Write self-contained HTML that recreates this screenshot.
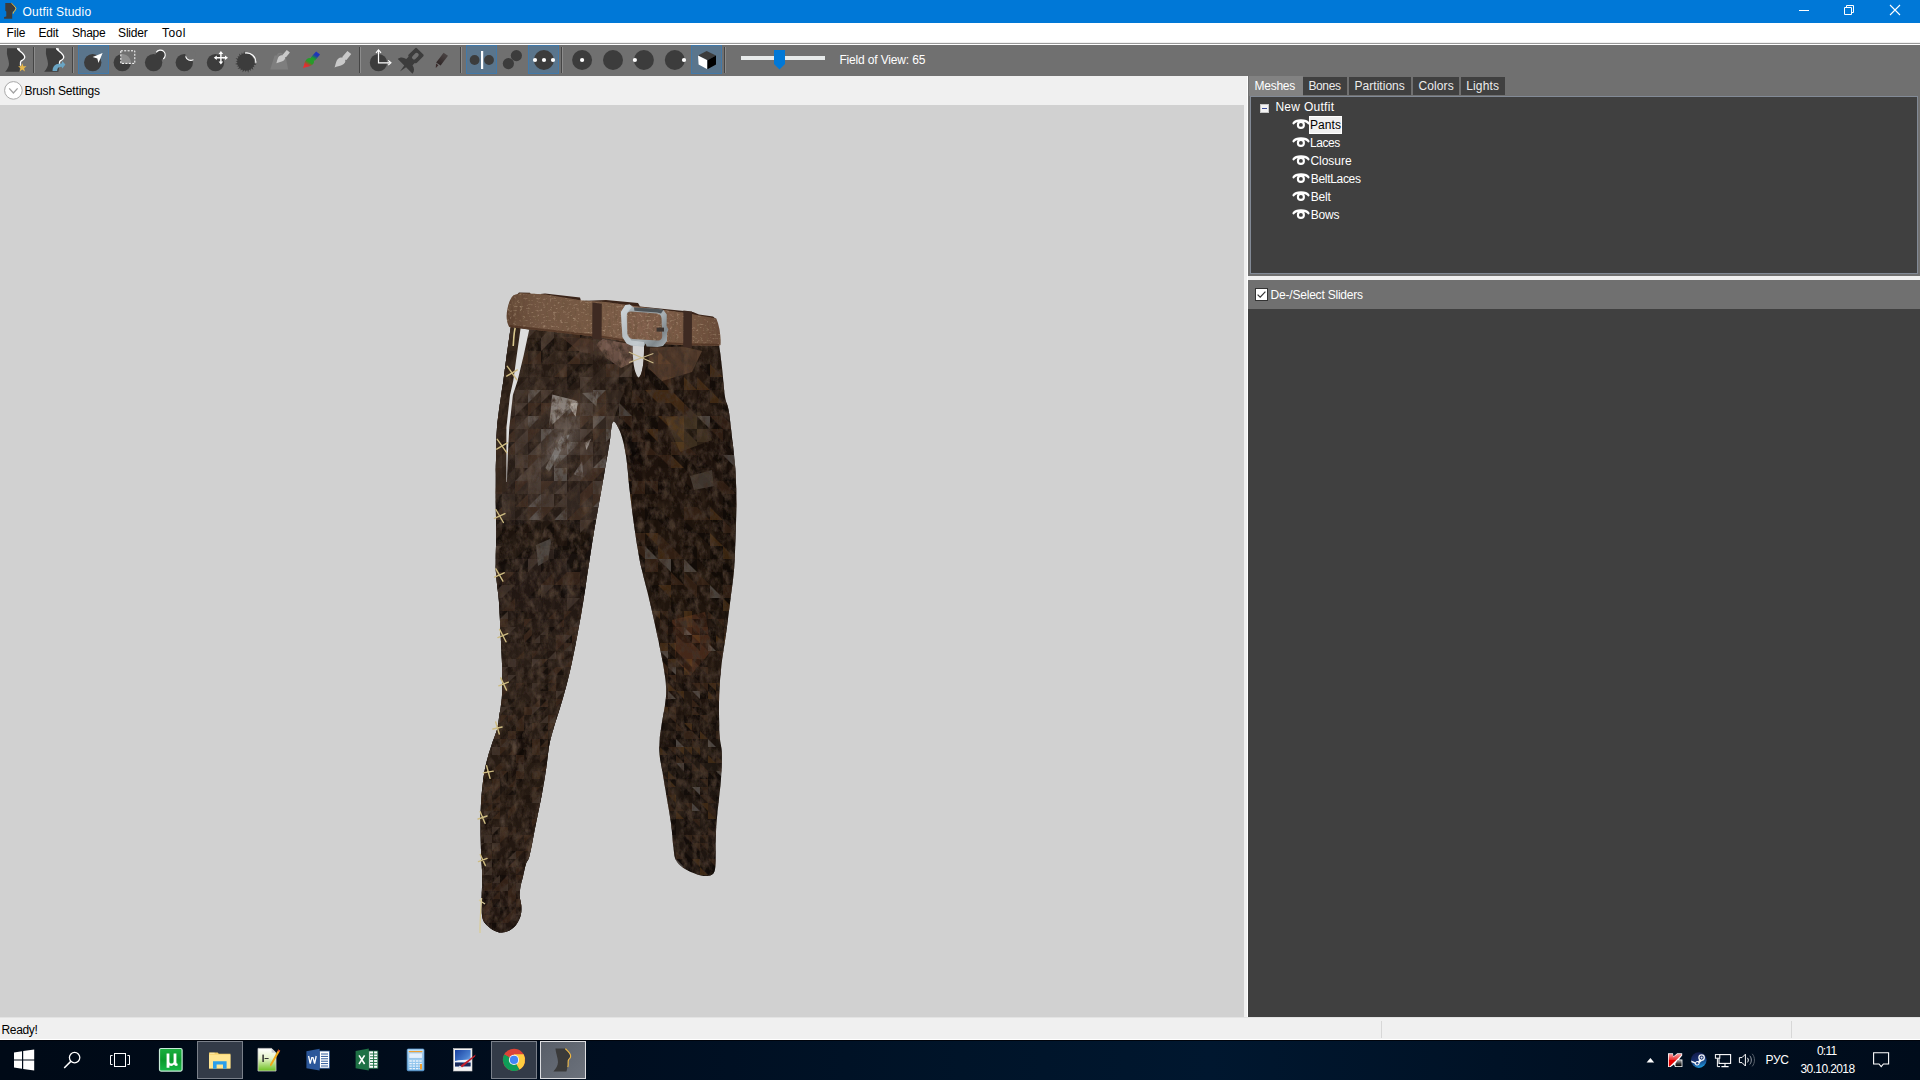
<!DOCTYPE html>
<html>
<head>
<meta charset="utf-8">
<title>Outfit Studio</title>
<style>
*{margin:0;padding:0;box-sizing:border-box}
html,body{width:1920px;height:1080px;overflow:hidden;background:#d1d1d1}
body{font-family:"Liberation Sans",sans-serif;font-size:12px;color:#000;position:relative}
.abs{position:absolute}
.t{position:absolute;white-space:nowrap;line-height:14px;font-size:12px}
#title{left:0;top:0;width:1920px;height:23px;background:#0078d7}
#menu{left:0;top:23px;width:1920px;height:20px;background:#fff}
#menuline1{left:0;top:42px;width:1920px;height:1px;background:#f0f0f0}
#menuline2{left:0;top:43px;width:1920px;height:1px;background:#999}
#menuline3{left:0;top:44px;width:1920px;height:1px;background:#fff}
#toolbar{left:0;top:45px;width:1920px;height:31px;background:#707070}
#brush{left:0;top:76px;width:1244px;height:29px;background:#f0f0f0}
#view{left:0;top:105px;width:1244px;height:913px;background:#d1d1d1}
#vsplit{left:1244px;top:76px;width:4px;height:942px;background:#f0f0f0}
#rpanel{left:1248px;top:76px;width:672px;height:942px;background:#707070}
#hsplit{left:1248px;top:276px;width:672px;height:4px;background:#f0f0f0}
#sliders{left:1248px;top:309px;width:672px;height:709px;background:#404040}
#status{left:0;top:1018px;width:1920px;height:22px;background:#f0f0f0}
#taskbar{left:0;top:1040px;width:1920px;height:40px;background:linear-gradient(90deg,#000a17 0%,#000b19 15%,#000e20 32%,#001429 50%,#00172f 63%,#001226 78%,#000e1f 90%,#000c1b 100%);border-top:1px solid #00040c}
.sep{position:absolute;top:47px;width:2px;height:26px;border-left:1px solid #454545;border-right:1px solid #8c8c8c}
.act{position:absolute;top:45px;height:29px;background:#5a758c;border:1px solid #4279a9}
.tab{position:absolute;top:77px;height:18px;background:#404040;color:#e8e8e8}
.w{color:#fff}
</style>
</head>
<body>
<div id="title" class="abs"></div>
<div id="menu" class="abs"></div>
<div id="menuline1" class="abs"></div>
<div id="menuline2" class="abs"></div>
<div id="menuline3" class="abs"></div>
<div id="toolbar" class="abs"></div>
<div id="brush" class="abs"></div>
<div id="view" class="abs"></div>
<div id="vsplit" class="abs"></div>
<div class="abs" style="left:1247px;top:76px;width:1px;height:941px;background:#fff"></div>
<div id="rpanel" class="abs"></div>
<div id="hsplit" class="abs"></div>
<div id="sliders" class="abs"></div>
<div id="status" class="abs"></div>
<div class="abs" style="left:0;top:1017px;width:1920px;height:1px;background:#e3e3e3"></div>
<div class="abs" style="left:0;top:1039px;width:1920px;height:1px;background:#fff"></div>
<div id="taskbar" class="abs"></div>

<!-- TEXT -->
<div class="t w" id="tx_title" style="left:22.5px;top:5px;letter-spacing:0.21px">Outfit Studio</div>
<div class="t" id="tx_file" style="left:6.5px;top:26px;letter-spacing:-0.17px">File</div>
<div class="t" id="tx_edit" style="left:38.5px;top:26px;letter-spacing:-0.17px">Edit</div>
<div class="t" id="tx_shape" style="left:72.0px;top:26px;letter-spacing:-0.25px">Shape</div>
<div class="t" id="tx_slider" style="left:118.1px;top:26px;letter-spacing:-0.22px">Slider</div>
<div class="t" id="tx_tool" style="left:161.9px;top:26px;letter-spacing:0.53px">Tool</div>
<div class="t w" id="tx_fov" style="left:839.4px;top:53px;letter-spacing:-0.16px">Field of View: 65</div>
<div class="t" id="tx_brush" style="left:24.5px;top:84px;letter-spacing:-0.19px">Brush Settings</div>
<div class="t" id="tx_ready" style="left:1.5px;top:1023px;letter-spacing:-0.34px">Ready!</div>

<svg class="abs" style="left:0;top:0" width="1920" height="23" viewBox="0 0 1920 23">
<path d="M5.3 3.1 H11.6 L14.2 6 L15.2 8.2 L14 10.8 L12.6 11.8 L12.2 13.4 V18.8 H4.1 V17 L6.3 16.4 V11.4 L5.3 10.8 Z" fill="#3c3c3c"/>
<path d="M11.4 3.2 L13.6 5.2 L16 8.2 L15 10.8 L13.6 11.8 L13.2 13.6" fill="none" stroke="#f2b530" stroke-width="1"/>
<path d="M1799 10.5 H1809" stroke="#fff" stroke-width="1"/>
<path d="M1844.5 7.5 H1851.5 V14.5 H1844.5 Z M1846.5 7 V5.5 H1853.5 V12.5 H1852" fill="none" stroke="#fff" stroke-width="1"/>
<path d="M1890 5 L1900 15 M1900 5 L1890 15" stroke="#fff" stroke-width="1.1"/>
</svg>
<svg class="abs" style="left:0;top:76px" width="30" height="29" viewBox="0 76 30 29">
<circle cx="13.4" cy="90.4" r="8.8" fill="#fff" stroke="#a8a8a8" stroke-width="1"/>
<path d="M9.2 88.4 L13.4 93 L17.6 88.4" fill="none" stroke="#a0a0a0" stroke-width="1.3"/>
</svg>
<!-- TOOLBAR -->
<!--TOOLBAR-START-->
<div class="sep" style="left:33px"></div>
<div class="sep" style="left:72px"></div>
<div class="sep" style="left:359px"></div>
<div class="sep" style="left:460px"></div>
<div class="sep" style="left:561px"></div>
<div class="sep" style="left:724px"></div>
<div class="act" style="left:78px;width:31px"></div>
<div class="act" style="left:466px;width:31px"></div>
<div class="act" style="left:528px;width:31px"></div>
<div class="act" style="left:691px;width:31px"></div>
<svg class="abs" style="left:0;top:45px" width="960" height="31" viewBox="0 45 960 31">
<defs>
<path id="bodyshape" d="M7.1 48.2 L16.9 48.2 C18.5 50.2 20.6 51.6 22.5 53.2 C24.2 54.8 25 56.4 24.6 57.8 C24.2 59.4 22.4 60.2 21 61.1 C20.2 61.8 20.4 63.4 20.4 64.9 L19.4 71.8 L5.2 71.8 C7.6 69 9.2 66 9 63.7 C8.8 60.5 7.2 56 6.9 53.6 Z"/>
<g id="bodyline"><path d="M17.6 48.8 C19 50.4 20.6 51.6 22.5 53.2 C24.2 54.8 25 56.4 24.6 57.8 C24.2 59.4 22.4 60.2 21 61.1 C20.2 61.8 20.4 63.4 20.5 65.2" fill="none" stroke="#fff" stroke-width="1.3" stroke-linecap="round"/><path d="M16.9 48.2 L19.6 48.2 L20 50.6 L18.8 50.6 Z" fill="#fff"/></g>
<linearGradient id="rgb" x1="0.85" y1="0" x2="0.25" y2="1">
<stop offset="0" stop-color="#2030c8"/><stop offset="0.22" stop-color="#2038b0"/><stop offset="0.42" stop-color="#20a028"/><stop offset="0.68" stop-color="#2a982a"/><stop offset="0.86" stop-color="#d83030"/><stop offset="1" stop-color="#e83030"/>
</linearGradient>
<linearGradient id="pencilg" x1="446" y1="54" x2="437" y2="66" gradientUnits="userSpaceOnUse">
<stop offset="0" stop-color="#4a4444"/><stop offset="1" stop-color="#2a2020"/>
</linearGradient>
<path id="brushshape" d="M14.6 0.4 L18.6 3.6 L13.6 9.8 L12.2 9.6 C13.2 11.6 11.6 13.8 9 15 C6.6 16 3.6 16.4 1.2 17.6 C2 15.6 2.4 13 3.4 10.6 C4.6 8 6.8 6.6 9.2 7.4 L9.6 6.2 Z"/>
</defs>
<!-- icon1 -->
<use href="#bodyshape" fill="#3c3c3c"/><use href="#bodyline"/>
<path d="M22.3 63.3 L23.4 66.2 L26.5 66.3 L24.1 68.3 L24.9 71.4 L22.3 69.6 L19.7 71.4 L20.5 68.3 L18.1 66.3 L21.2 66.2 Z" fill="#e8b84a"/>
<!-- icon2 -->
<g transform="translate(39 0)"><use href="#bodyshape" fill="#3c3c3c"/><use href="#bodyline"/></g>
<path d="M52.5 70.9 C52.6 67.6 54 65.4 56.4 64.3 C58 63.6 60 63.4 61.9 63.4 L62.2 60.9 L65.4 64.5 L62.4 68.6 L61.6 66.8 C60.4 66.8 59.4 67 58.6 67.5 C57.6 68.2 57.2 69.4 57.2 70.9 Z" fill="#6aa5c4"/>
<!-- icon3 select -->
<circle cx="92.7" cy="62.6" r="8.7" fill="#3c3c3c"/>
<path d="M102.6 52.9 L92.6 57.1 L97.3 58.4 L98.5 63 Z" fill="#fff"/>
<!-- icon4 mask -->
<circle cx="122.3" cy="62.6" r="8.7" fill="#3c3c3c"/>
<path d="M120.8 50.8 H134.8 V63.4 H120.8 Z" fill="#707070"/>
<path d="M120.8 54 C126 53.2 131 57 131 63.4 L120.8 63.4 Z" fill="#8e8e8e"/>
<path d="M120.8 50.8 H134.8 V63.4 H120.8 Z" fill="none" stroke="#fff" stroke-width="1" stroke-dasharray="2 1.4"/>
<!-- icon5 inflate -->
<circle cx="153.6" cy="62.6" r="8.7" fill="#3c3c3c"/>
<circle cx="160.3" cy="55" r="4.8" fill="#3c3c3c"/>
<path d="M156.2 52.4 A4.9 4.9 0 1 1 163.2 59" fill="none" stroke="#fff" stroke-width="1.1"/>
<!-- icon6 deflate -->
<circle cx="184.3" cy="62.6" r="8.7" fill="#3c3c3c"/>
<circle cx="190.6" cy="55.2" r="5.2" fill="#707070"/>
<path d="M185.6 56.4 A5.2 5.2 0 0 0 193.4 59.6" fill="none" stroke="#fff" stroke-width="1.1"/>
<!-- icon7 move -->
<circle cx="215.5" cy="62.6" r="8.7" fill="#3c3c3c"/>
<g fill="#fff"><path d="M220.2 53.4 H221.6 V62.4 H220.2 Z M216.2 57 H225.8 V58.4 H216.2 Z"/>
<path d="M220.9 51 L223.2 54 H218.6 Z M220.9 64.4 L223.2 61.4 H218.6 Z M213.8 57.7 L216.8 55.4 V60 Z M228 57.7 L225 55.4 V60 Z"/></g>
<!-- icon8 smooth -->
<path d="M253.87 62.60 L256.44 65.05 L253.40 64.67 L254.56 67.30 L252.41 66.56 L253.37 69.98 L250.95 68.11 L250.61 70.95 L249.13 69.22 L248.22 72.65 L247.09 69.81 L245.35 72.08 L244.96 69.84 L242.43 72.34 L242.90 69.31 L240.24 70.39 L241.05 68.26 L237.60 69.12 L239.54 66.75 L236.71 66.32 L238.49 64.90 L235.08 63.89 L237.96 62.84 L235.74 61.03 L237.99 60.71 L235.58 58.11 L238.58 58.67 L237.59 55.98 L239.69 56.85 L238.94 53.38 L241.24 55.39 L241.76 52.58 L243.13 54.40 L244.25 51.03 L245.20 53.93 Z" fill="#3c3c3c"/>
<circle cx="245.9" cy="61.9" r="8.5" fill="#3c3c3c"/>
<path d="M244.9 53 A9.2 9.2 0 0 1 255.8 62.8" fill="none" stroke="#fff" stroke-width="1.2"/>
<!-- icon9 weight (disabled) -->
<g fill="#7e7e7e"><path d="M274.6 55.6 H285.4 L288.2 69.6 H270.2 Z"/><path d="M277 56 A3.2 3.2 0 1 1 283.4 56 L282 56 A1.8 1.8 0 1 0 278.4 56 Z"/></g>
<use href="#brushshape" transform="translate(275.4 49.6) scale(0.78)" fill="#c9c9c9"/>
<!-- icon10 colour brush -->
<use href="#brushshape" transform="translate(301.8 51) scale(0.98)" fill="url(#rgb)"/>
<!-- icon11 alpha brush -->
<use href="#brushshape" transform="translate(333.4 50.6) scale(0.96)" fill="#c9c9c9"/>
<!-- icon12 transform -->
<circle cx="378.5" cy="62.6" r="8.7" fill="#3c3c3c"/>
<path d="M378.5 50.4 V62.8 H390" fill="none" stroke="#fff" stroke-width="1.2"/>
<path d="M376 52.8 L378.5 49.8 L381 52.8 M388.2 60.4 L391 62.8 L388.2 65.2" fill="none" stroke="#fff" stroke-width="1.1"/>
<!-- icon13 pin -->
<g transform="translate(407 64.5) rotate(45)" fill="#3c3c3c">
<path d="M-4.2 -18.6 H4.2 C5.2 -18.6 5.8 -18 5.8 -17 V-8.2 C5.8 -7.4 5.2 -6.8 4.4 -6.6 V-3.4 C8 -2.6 10.2 -0.6 10.4 2.6 H1.3 L0 10 L-1.3 2.6 H-10.4 C-10.2 -0.6 -8 -2.6 -4.4 -3.4 V-6.6 C-5.2 -6.8 -5.8 -7.4 -5.8 -8.2 V-17 C-5.8 -18 -5.2 -18.6 -4.2 -18.6 Z"/>
<rect x="-2" y="-15.6" width="4" height="7.6" rx="1.8" fill="#707070"/>
</g>
<!-- icon14 pencil -->
<path d="M443.6 52.8 L448 55.8 L440.6 65.4 L436.2 62.4 Z" fill="url(#pencilg)"/>
<path d="M436 63.6 L438.4 65.2 L435.8 68 Z" fill="#3a2a2a"/>
<!-- icon15 mirror -->
<circle cx="474.6" cy="60" r="4.9" fill="#3c3c3c"/><circle cx="489" cy="60" r="4.9" fill="#3c3c3c"/>
<rect x="481" y="51" width="2.2" height="18" fill="#fff"/>
<!-- icon16 connected -->
<circle cx="508.4" cy="63.6" r="5.6" fill="#3c3c3c"/><circle cx="516.4" cy="55.6" r="5.6" fill="#3c3c3c"/>
<!-- icon17 -->
<circle cx="543.9" cy="60" r="10" fill="#3c3c3c"/>
<circle cx="535" cy="60" r="2.1" fill="#fff"/><circle cx="544" cy="60" r="2.1" fill="#fff"/><circle cx="553" cy="60" r="2.1" fill="#fff"/>
<!-- icons 18-21 -->
<circle cx="582.1" cy="60" r="10" fill="#3c3c3c"/><circle cx="582.1" cy="60" r="2.1" fill="#fff"/>
<circle cx="613" cy="60" r="10" fill="#3c3c3c"/>
<circle cx="643.9" cy="60" r="10" fill="#3c3c3c"/><circle cx="634.9" cy="60" r="2.1" fill="#fff"/>
<circle cx="674.8" cy="60" r="10" fill="#3c3c3c"/><circle cx="684" cy="60" r="2.1" fill="#fff"/>
<!-- icon22 cube -->
<path d="M698 55.6 L706.6 51 L716 55.4 L707.4 60.2 Z" fill="#3c3c3c"/>
<path d="M698 55.6 L707.4 60.2 L707.4 69.2 L698.6 64.6 Z" fill="#fff"/>
<path d="M707.4 60.2 L716 55.4 L716 64.4 L707.4 69.2 Z" fill="#000"/>
<!-- slider -->
<rect x="741" y="56" width="84" height="4" fill="#e7eaea"/>
<path d="M774 50 H785 V64 L779.5 69.4 L774 64 Z" fill="#0078d7"/>
</svg>
<!--TOOLBAR-END-->

<!-- RIGHT PANEL -->
<!--RIGHT-START-->
<div class="abs" style="left:1249px;top:76px;width:54px;height:20px;background:#828282"></div>
<div class="tab" style="left:1303px;width:44px"></div>
<div class="tab" style="left:1349px;width:62px"></div>
<div class="tab" style="left:1413px;width:46px"></div>
<div class="tab" style="left:1461px;width:44px"></div>
<div class="t w" id="tx_meshes" style="left:1254.6px;top:79px;letter-spacing:-0.27px">Meshes</div>
<div class="t" id="tx_bones" style="left:1308.4px;top:79px;color:#ececec;letter-spacing:-0.35px">Bones</div>
<div class="t" id="tx_part" style="left:1354.6px;top:79px;color:#ececec;letter-spacing:0.02px">Partitions</div>
<div class="t" id="tx_colors" style="left:1418.4px;top:79px;color:#ececec;letter-spacing:0.12px">Colors</div>
<div class="t" id="tx_lights" style="left:1466.2px;top:79px;color:#ececec;letter-spacing:0.15px">Lights</div>
<div class="abs" id="tree" style="left:1250px;top:96px;width:668px;height:178px;background:#404040;border:1px solid #828a96"></div>
<div class="abs" style="left:1260px;top:104px;width:9px;height:9px;background:#f4f4f4;border:1px solid #c8c8c8"></div>
<div class="abs" style="left:1262px;top:108px;width:5px;height:1px;background:#3c4c9c"></div>
<div class="t w" id="tx_newoutfit" style="left:1275.4px;top:100px;letter-spacing:0.29px">New Outfit</div>
<div class="abs" style="left:1309px;top:116px;width:33px;height:18px;background:#f0f0f0;border:1px solid #fff"></div>
<div class="t" id="tx_pants" style="left:1310.0px;top:118px;letter-spacing:0.05px">Pants</div>
<div class="t w" id="tx_laces" style="left:1310.0px;top:136px;letter-spacing:-0.45px">Laces</div>
<div class="t w" id="tx_closure" style="left:1310.4px;top:154px;letter-spacing:-0.02px">Closure</div>
<div class="t w" id="tx_beltlaces" style="left:1310.7px;top:172px;letter-spacing:-0.30px">BeltLaces</div>
<div class="t w" id="tx_belt" style="left:1310.7px;top:190px;letter-spacing:-0.17px">Belt</div>
<div class="t w" id="tx_bows" style="left:1310.7px;top:208px;letter-spacing:-0.17px">Bows</div>
<svg class="abs" style="left:1290px;top:114px" width="22" height="110" viewBox="1290 114 22 110">
<defs><g id="eye"><path d="M1293.6 123.2 C1296 119.6 1306 119.6 1308.4 123.2" fill="none" stroke="#fff" stroke-width="2.3" stroke-linecap="round"/>
<circle cx="1300.9" cy="124.9" r="3" fill="none" stroke="#fff" stroke-width="2.1"/></g></defs>
<use href="#eye"/><use href="#eye" y="18"/><use href="#eye" y="36"/><use href="#eye" y="54"/><use href="#eye" y="72"/><use href="#eye" y="90"/>
</svg>
<div class="abs" style="left:1255px;top:288px;width:13px;height:13px;background:#fff;border:1px solid #333"></div>
<svg class="abs" style="left:1255px;top:288px" width="13" height="13" viewBox="0 0 13 13"><path d="M2.6 6.6 L5.2 9.2 L10.4 3.6" fill="none" stroke="#333" stroke-width="1.2"/></svg>
<div class="t w" id="tx_desel" style="left:1270.6px;top:288px;letter-spacing:-0.21px">De-/Select Sliders</div>
<!-- status bar separators -->
<div class="abs" style="left:1381px;top:1021px;width:1px;height:17px;background:#d7d7d7"></div>
<div class="abs" style="left:1791px;top:1021px;width:1px;height:17px;background:#d7d7d7"></div>
<!--RIGHT-END-->

<!-- VIEWPORT -->
<!--PANTS-START-->
<svg class="abs" style="left:460px;top:280px" width="300" height="670" viewBox="460 280 300 670">
<defs>
<clipPath id="cpAll"><path d="M510.9 326.6 C510.2 331.0 508.2 344.1 507.0 353.0 C505.8 361.9 504.5 373.0 503.5 380.0 C502.5 387.0 502.3 387.1 501.2 395.0 C500.1 402.9 497.9 416.6 497.0 427.4 C496.1 438.2 496.2 452.5 496.0 460.0 C495.8 467.5 495.8 465.2 495.8 472.5 C495.8 479.8 495.7 493.4 495.8 503.8 C495.9 514.2 496.2 524.0 496.2 535.0 C496.2 546.0 495.4 559.0 495.8 570.0 C496.2 581.0 498.1 590.8 498.9 601.2 C499.7 611.6 500.0 622.1 500.5 632.5 C501.0 642.9 501.8 653.4 502.0 663.8 C502.2 674.2 502.5 685.9 502.0 695.0 C501.5 704.1 499.8 712.6 498.9 718.4 C498.0 724.2 498.1 725.5 496.9 730.0 C495.6 734.5 493.1 740.4 491.4 745.6 C489.7 750.8 488.0 756.0 486.7 761.2 C485.4 766.4 484.5 770.4 483.6 776.9 C482.7 783.4 481.7 792.5 481.2 800.3 C480.7 808.1 480.5 814.7 480.5 823.8 C480.5 832.9 480.9 847.3 481.2 855.0 C481.4 862.7 481.9 864.7 482.0 870.0 C482.1 875.3 482.1 881.1 482.0 887.0 C481.9 892.9 481.4 900.1 481.5 905.5 C481.6 910.9 481.7 915.8 482.9 919.4 C484.1 923.0 486.7 924.9 488.9 926.9 C491.1 928.9 494.1 930.6 496.3 931.5 C498.5 932.4 499.7 932.6 501.9 932.4 C504.1 932.2 506.8 931.9 509.3 930.5 C511.8 929.1 514.8 926.6 516.7 924.0 C518.6 921.4 520.0 917.9 520.8 914.8 C521.6 911.7 521.5 908.6 521.3 905.5 C521.1 902.4 519.8 899.4 519.6 896.3 C519.5 893.2 519.9 890.1 520.4 887.0 C520.9 883.9 521.8 881.6 522.7 877.8 C523.6 873.9 524.7 867.7 525.9 863.9 C527.1 860.1 528.0 861.7 529.7 855.0 C531.4 848.3 533.8 834.2 535.9 823.8 C538.0 813.4 540.5 801.6 542.2 792.5 C543.9 783.4 544.9 776.8 546.1 769.0 C547.3 761.2 548.0 752.1 549.2 745.6 C550.4 739.1 550.7 738.4 553.1 730.0 C555.5 721.6 560.7 706.0 563.8 695.0 C566.9 684.0 569.3 674.2 571.6 663.8 C573.9 653.4 575.8 642.9 577.8 632.5 C579.8 622.1 581.6 611.6 583.3 601.2 C585.0 590.8 586.3 581.0 588.0 570.0 C589.7 559.0 591.6 546.0 593.4 535.0 C595.2 524.0 597.1 514.2 598.9 503.8 C600.7 493.4 602.6 482.9 604.4 472.5 C606.2 462.1 608.4 449.7 609.8 441.2 C611.2 432.7 611.2 423.0 613.0 421.7 C614.8 420.4 618.6 427.5 620.8 433.4 C623.0 439.3 624.8 447.8 626.2 456.9 C627.6 466.0 628.2 477.7 629.4 488.1 C630.6 498.5 631.9 509.0 633.3 519.4 C634.7 529.8 636.6 542.2 638.0 550.6 C639.4 559.0 639.9 561.6 641.9 570.0 C643.9 578.4 647.2 590.8 649.7 601.2 C652.2 611.6 654.5 622.1 656.7 632.5 C658.9 642.9 661.4 654.7 663.0 663.8 C664.6 672.9 665.7 680.7 666.1 687.2 C666.5 693.7 666.1 696.3 665.3 702.8 C664.5 709.3 662.3 720.0 661.4 726.2 C660.5 732.4 659.9 735.5 659.6 740.0 C659.3 744.5 658.8 747.2 659.4 753.4 C660.0 759.5 662.0 769.1 663.3 776.9 C664.6 784.7 665.9 792.5 667.2 800.3 C668.5 808.1 670.1 816.0 671.1 823.8 C672.1 831.6 672.6 841.2 673.4 847.2 C674.2 853.2 674.2 856.3 675.8 859.7 C677.4 863.1 679.5 865.1 682.8 867.5 C686.0 869.9 691.4 872.4 695.3 873.8 C699.2 875.2 703.2 876.2 706.2 876.1 C709.2 876.0 712.0 875.4 713.6 873.2 C715.2 871.0 715.3 867.1 715.6 862.8 C715.9 858.5 715.5 853.7 715.6 847.2 C715.7 840.7 715.9 831.6 716.4 823.8 C716.9 816.0 718.0 808.1 718.8 800.3 C719.6 792.5 720.6 784.7 721.1 776.9 C721.6 769.1 722.1 759.9 721.9 753.4 C721.7 746.9 720.2 742.5 719.8 738.0 C719.3 733.5 719.3 733.4 719.2 726.2 C719.1 719.0 718.8 705.4 719.2 695.0 C719.6 684.6 720.4 674.2 721.6 663.8 C722.8 653.4 724.8 642.9 726.2 632.5 C727.6 622.1 728.9 611.6 730.2 601.2 C731.5 590.8 733.1 581.0 734.0 570.0 C734.9 559.0 735.2 546.0 735.6 535.0 C736.0 524.0 736.4 514.2 736.4 503.8 C736.4 493.4 736.2 482.9 735.6 472.5 C735.0 462.1 733.7 451.6 732.5 441.2 C731.3 430.8 729.9 417.4 728.6 410.0 C727.4 402.6 726.1 403.8 725.0 396.7 C723.9 389.6 723.0 376.0 722.0 367.5 C721.0 359.0 719.7 349.2 719.2 345.6 L684.2 344.9 L625.8 341.2 L592.3 336.1 Z"/></clipPath>
<clipPath id="cpLeft"><path d="M460 280 H640 V345 L613 421.7 V960 H460 Z"/></clipPath>
<linearGradient id="gR" x1="0" y1="345" x2="0" y2="876" gradientUnits="userSpaceOnUse">
<stop offset="0" stop-color="#261a12"/><stop offset="0.2" stop-color="#1d120c"/><stop offset="0.45" stop-color="#1e140c"/><stop offset="0.62" stop-color="#241810"/><stop offset="0.8" stop-color="#201812"/><stop offset="1" stop-color="#1e1510"/>
</linearGradient>
<linearGradient id="gL" x1="0" y1="330" x2="0" y2="932" gradientUnits="userSpaceOnUse">
<stop offset="0" stop-color="#2d2017"/><stop offset="0.2" stop-color="#342923"/><stop offset="0.36" stop-color="#2f241e"/><stop offset="0.42" stop-color="#201612"/><stop offset="0.55" stop-color="#291e17"/><stop offset="0.75" stop-color="#251a12"/><stop offset="1" stop-color="#201510"/>
</linearGradient>
<linearGradient id="gBelt" x1="506" y1="0" x2="721" y2="0" gradientUnits="userSpaceOnUse">
<stop offset="0" stop-color="#5d4230"/><stop offset="0.15" stop-color="#735643"/><stop offset="0.4" stop-color="#795b45"/><stop offset="0.65" stop-color="#82604d"/><stop offset="0.85" stop-color="#775742"/><stop offset="1" stop-color="#654736"/>
</linearGradient>
<radialGradient id="gHi" cx="562" cy="440" r="60" gradientUnits="userSpaceOnUse" gradientTransform="rotate(-62 562 440) scale(1 0.38) translate(0 718)">
<stop offset="0" stop-color="#9a928c" stop-opacity="0.6"/><stop offset="1" stop-color="#6a5a50" stop-opacity="0"/>
</radialGradient>
<linearGradient id="gBuck" x1="620" y1="304" x2="668" y2="347" gradientUnits="userSpaceOnUse"><stop offset="0" stop-color="#c8d0d4"/><stop offset="0.35" stop-color="#8e969a"/><stop offset="0.6" stop-color="#a8b0b4"/><stop offset="0.8" stop-color="#80888c"/><stop offset="1" stop-color="#b0b8bc"/></linearGradient>
<linearGradient id="gEdgeR" x1="613" y1="0" x2="737" y2="0" gradientUnits="userSpaceOnUse">
<stop offset="0" stop-color="#000" stop-opacity="0.35"/><stop offset="0.25" stop-color="#000" stop-opacity="0"/><stop offset="0.75" stop-color="#000" stop-opacity="0"/><stop offset="1" stop-color="#000" stop-opacity="0.25"/>
</linearGradient>
<filter id="fDark" x="460" y="280" width="300" height="670" filterUnits="userSpaceOnUse">
<feTurbulence type="fractalNoise" baseFrequency="0.16 0.1" numOctaves="4" seed="7" result="n"/>
<feColorMatrix in="n" type="matrix" values="0 0 0 0 0.05  0 0 0 0 0.03  0 0 0 0 0.02  2.8 0 0 0 -1.2" result="a"/>
<feComposite in="a" in2="SourceGraphic" operator="in"/>
</filter>
<filter id="fLight" x="460" y="280" width="300" height="670" filterUnits="userSpaceOnUse">
<feTurbulence type="fractalNoise" baseFrequency="0.11 0.07" numOctaves="4" seed="23" result="n"/>
<feColorMatrix in="n" type="matrix" values="0 0 0 0 0.40  0 0 0 0 0.30  0 0 0 0 0.24  0 1.5 0 0 -0.78" result="a"/>
<feComposite in="a" in2="SourceGraphic" operator="in"/>
</filter>
<filter id="fLight2" x="460" y="280" width="300" height="670" filterUnits="userSpaceOnUse">
<feTurbulence type="fractalNoise" baseFrequency="0.12 0.05" numOctaves="3" seed="41" result="n"/>
<feColorMatrix in="n" type="matrix" values="0 0 0 0 0.34  0 0 0 0 0.22  0 0 0 0 0.13  0 0 1.8 0 -0.9" result="a"/>
<feComposite in="a" in2="SourceGraphic" operator="in"/>
</filter>
<filter id="fBelt" x="500" y="285" width="230" height="70" filterUnits="userSpaceOnUse">
<feTurbulence type="fractalNoise" baseFrequency="0.35 0.09" numOctaves="3" seed="5" result="n"/>
<feColorMatrix in="n" type="matrix" values="0 0 0 0 0.16  0 0 0 0 0.09  0 0 0 0 0.05  2.4 0 0 0 -0.95" result="a"/>
<feComposite in="a" in2="SourceGraphic" operator="in"/>
</filter>
<filter id="fBelt2" x="500" y="285" width="230" height="70" filterUnits="userSpaceOnUse">
<feTurbulence type="fractalNoise" baseFrequency="0.3 0.5" numOctaves="2" seed="19" result="n"/>
<feColorMatrix in="n" type="matrix" values="0 0 0 0 0.68  0 0 0 0 0.52  0 0 0 0 0.36  0 1.5 0 0 -0.86" result="a"/>
<feComposite in="a" in2="SourceGraphic" operator="in"/>
</filter>
</defs>
<!-- waist tabs behind belt -->
<path d="M519 292.6 L530 292.8 L531 295 L545 293.4 L580 297.6 L581 301 L606 300 L638 303 L640 306.5 L684 311 L693 312 L699 314.6 L713 316.4 L716 319 L716 324 L512 300 Z" fill="#3a2419"/>
<!-- strap -->
<!-- pants body -->
<path d="M510.9 326.6 C510.2 331.0 508.2 344.1 507.0 353.0 C505.8 361.9 504.5 373.0 503.5 380.0 C502.5 387.0 502.3 387.1 501.2 395.0 C500.1 402.9 497.9 416.6 497.0 427.4 C496.1 438.2 496.2 452.5 496.0 460.0 C495.8 467.5 495.8 465.2 495.8 472.5 C495.8 479.8 495.7 493.4 495.8 503.8 C495.9 514.2 496.2 524.0 496.2 535.0 C496.2 546.0 495.4 559.0 495.8 570.0 C496.2 581.0 498.1 590.8 498.9 601.2 C499.7 611.6 500.0 622.1 500.5 632.5 C501.0 642.9 501.8 653.4 502.0 663.8 C502.2 674.2 502.5 685.9 502.0 695.0 C501.5 704.1 499.8 712.6 498.9 718.4 C498.0 724.2 498.1 725.5 496.9 730.0 C495.6 734.5 493.1 740.4 491.4 745.6 C489.7 750.8 488.0 756.0 486.7 761.2 C485.4 766.4 484.5 770.4 483.6 776.9 C482.7 783.4 481.7 792.5 481.2 800.3 C480.7 808.1 480.5 814.7 480.5 823.8 C480.5 832.9 480.9 847.3 481.2 855.0 C481.4 862.7 481.9 864.7 482.0 870.0 C482.1 875.3 482.1 881.1 482.0 887.0 C481.9 892.9 481.4 900.1 481.5 905.5 C481.6 910.9 481.7 915.8 482.9 919.4 C484.1 923.0 486.7 924.9 488.9 926.9 C491.1 928.9 494.1 930.6 496.3 931.5 C498.5 932.4 499.7 932.6 501.9 932.4 C504.1 932.2 506.8 931.9 509.3 930.5 C511.8 929.1 514.8 926.6 516.7 924.0 C518.6 921.4 520.0 917.9 520.8 914.8 C521.6 911.7 521.5 908.6 521.3 905.5 C521.1 902.4 519.8 899.4 519.6 896.3 C519.5 893.2 519.9 890.1 520.4 887.0 C520.9 883.9 521.8 881.6 522.7 877.8 C523.6 873.9 524.7 867.7 525.9 863.9 C527.1 860.1 528.0 861.7 529.7 855.0 C531.4 848.3 533.8 834.2 535.9 823.8 C538.0 813.4 540.5 801.6 542.2 792.5 C543.9 783.4 544.9 776.8 546.1 769.0 C547.3 761.2 548.0 752.1 549.2 745.6 C550.4 739.1 550.7 738.4 553.1 730.0 C555.5 721.6 560.7 706.0 563.8 695.0 C566.9 684.0 569.3 674.2 571.6 663.8 C573.9 653.4 575.8 642.9 577.8 632.5 C579.8 622.1 581.6 611.6 583.3 601.2 C585.0 590.8 586.3 581.0 588.0 570.0 C589.7 559.0 591.6 546.0 593.4 535.0 C595.2 524.0 597.1 514.2 598.9 503.8 C600.7 493.4 602.6 482.9 604.4 472.5 C606.2 462.1 608.4 449.7 609.8 441.2 C611.2 432.7 611.2 423.0 613.0 421.7 C614.8 420.4 618.6 427.5 620.8 433.4 C623.0 439.3 624.8 447.8 626.2 456.9 C627.6 466.0 628.2 477.7 629.4 488.1 C630.6 498.5 631.9 509.0 633.3 519.4 C634.7 529.8 636.6 542.2 638.0 550.6 C639.4 559.0 639.9 561.6 641.9 570.0 C643.9 578.4 647.2 590.8 649.7 601.2 C652.2 611.6 654.5 622.1 656.7 632.5 C658.9 642.9 661.4 654.7 663.0 663.8 C664.6 672.9 665.7 680.7 666.1 687.2 C666.5 693.7 666.1 696.3 665.3 702.8 C664.5 709.3 662.3 720.0 661.4 726.2 C660.5 732.4 659.9 735.5 659.6 740.0 C659.3 744.5 658.8 747.2 659.4 753.4 C660.0 759.5 662.0 769.1 663.3 776.9 C664.6 784.7 665.9 792.5 667.2 800.3 C668.5 808.1 670.1 816.0 671.1 823.8 C672.1 831.6 672.6 841.2 673.4 847.2 C674.2 853.2 674.2 856.3 675.8 859.7 C677.4 863.1 679.5 865.1 682.8 867.5 C686.0 869.9 691.4 872.4 695.3 873.8 C699.2 875.2 703.2 876.2 706.2 876.1 C709.2 876.0 712.0 875.4 713.6 873.2 C715.2 871.0 715.3 867.1 715.6 862.8 C715.9 858.5 715.5 853.7 715.6 847.2 C715.7 840.7 715.9 831.6 716.4 823.8 C716.9 816.0 718.0 808.1 718.8 800.3 C719.6 792.5 720.6 784.7 721.1 776.9 C721.6 769.1 722.1 759.9 721.9 753.4 C721.7 746.9 720.2 742.5 719.8 738.0 C719.3 733.5 719.3 733.4 719.2 726.2 C719.1 719.0 718.8 705.4 719.2 695.0 C719.6 684.6 720.4 674.2 721.6 663.8 C722.8 653.4 724.8 642.9 726.2 632.5 C727.6 622.1 728.9 611.6 730.2 601.2 C731.5 590.8 733.1 581.0 734.0 570.0 C734.9 559.0 735.2 546.0 735.6 535.0 C736.0 524.0 736.4 514.2 736.4 503.8 C736.4 493.4 736.2 482.9 735.6 472.5 C735.0 462.1 733.7 451.6 732.5 441.2 C731.3 430.8 729.9 417.4 728.6 410.0 C727.4 402.6 726.1 403.8 725.0 396.7 C723.9 389.6 723.0 376.0 722.0 367.5 C721.0 359.0 719.7 349.2 719.2 345.6 L684.2 344.9 L625.8 341.2 L592.3 336.1 Z" fill="url(#gR)"/>
<g clip-path="url(#cpAll)">
<rect x="460" y="280" width="300" height="670" fill="url(#gEdgeR)"/>
<g clip-path="url(#cpLeft)"><rect x="460" y="280" width="300" height="670" fill="url(#gL)"/>
<rect x="460" y="280" width="300" height="670" fill="url(#gHi)"/>
<path d="M497 528 L548 520 L590 534 L586 556 L540 548 L500 566 Z" fill="#1e140e" opacity="0.75"/>
<path d="M507 738 L530 728 L527 760 L512 778 Z" fill="#160e0a" opacity="0.8"/>
</g>
<path d="M623 433 L640 440 L632 470 Z" fill="#0c0806" opacity="0.8"/>
<path d="M672 620 L705 612 L712 650 L690 676 L676 660 Z" fill="#5c3420" opacity="0.6"/>
<path d="M665 418 L700 412 L712 440 L680 452 Z" fill="#5a4a30" opacity="0.5"/>
<!--FACETS-->
<g><path d="M567 325L580 325L567 338ZM580 325L593 325L580 338ZM606 325L606 338L593 338ZM541 338L541 351L528 351ZM554 338L554 351L541 351ZM567 338L580 338L567 351ZM671 338L684 351L671 351ZM502 351L515 351L502 364ZM541 351L554 351L541 364ZM567 351L580 351L567 364ZM619 351L619 364L606 364ZM645 351L658 351L658 364ZM658 351L671 351L671 364ZM671 351L684 351L684 364ZM684 351L697 351L697 364ZM580 364L580 377L567 377ZM580 364L593 364L580 377ZM645 364L658 364L658 377ZM645 364L658 377L645 377ZM671 364L684 377L671 377ZM697 364L710 364L710 377ZM502 377L515 377L502 390ZM567 377L580 377L567 390ZM619 377L632 377L619 390ZM632 377L645 390L632 390ZM645 377L658 377L658 390ZM658 377L671 390L658 390ZM710 377L723 377L723 390ZM710 377L723 390L710 390ZM723 377L736 377L736 390ZM502 390L515 390L502 403ZM671 390L684 390L684 403ZM489 403L502 403L489 416ZM502 403L515 403L502 416ZM632 403L645 403L645 416ZM684 403L697 403L697 416ZM723 403L736 416L723 416ZM619 416L632 429L619 429ZM645 416L658 416L658 429ZM645 416L658 429L645 429ZM697 416L710 429L697 429ZM710 416L723 429L710 429ZM723 416L736 416L736 429ZM645 429L658 442L645 442ZM684 429L697 429L697 442ZM502 442L515 442L502 455ZM632 442L645 455L632 455ZM723 442L736 442L736 455ZM632 455L645 455L645 468ZM671 455L684 455L684 468ZM684 455L697 468L684 468ZM697 455L710 468L697 468ZM710 455L723 455L723 468ZM684 468L697 468L697 481ZM697 468L710 481L697 481ZM723 468L736 481L723 481ZM619 481L632 481L632 494ZM619 481L632 494L619 494ZM645 481L658 494L645 494ZM658 481L671 481L671 494ZM658 481L671 494L658 494ZM684 481L697 494L684 494ZM697 481L710 481L710 494ZM502 494L502 507L489 507ZM723 494L736 507L723 507ZM489 507L502 507L489 520ZM645 507L658 507L658 520ZM645 507L658 520L645 520ZM658 507L671 520L658 520ZM723 507L736 520L723 520ZM489 520L502 520L489 533ZM502 520L515 520L502 533ZM515 520L528 520L515 533ZM541 520L541 533L528 533ZM554 520L554 533L541 533ZM567 520L580 520L567 533ZM580 520L580 533L567 533ZM593 520L606 520L593 533ZM632 520L645 533L632 533ZM645 520L658 533L645 533ZM658 520L671 520L671 533ZM684 520L697 533L684 533ZM710 520L723 520L723 533ZM502 533L502 546L489 546ZM554 533L554 546L541 546ZM567 533L580 533L567 546ZM580 533L580 546L567 546ZM593 533L593 546L580 546ZM593 533L606 533L593 546ZM697 533L710 533L710 546ZM528 546L528 559L515 559ZM528 546L541 546L528 559ZM554 546L567 546L554 559ZM567 546L567 559L554 559ZM567 546L580 546L567 559ZM580 546L580 559L567 559ZM593 546L593 559L580 559ZM632 546L645 559L632 559ZM645 546L658 546L658 559ZM684 546L697 546L697 559ZM710 546L723 546L723 559ZM710 546L723 559L710 559ZM502 559L502 572L489 572ZM502 559L515 559L502 572ZM515 559L515 572L502 572ZM528 559L528 572L515 572ZM541 559L554 559L541 572ZM567 559L580 559L567 572ZM580 559L580 572L567 572ZM580 559L593 559L580 572ZM632 559L645 559L645 572ZM632 559L645 572L632 572ZM671 559L684 572L671 572ZM684 559L697 559L697 572ZM697 559L710 559L710 572ZM723 559L736 572L723 572ZM671 572L684 572L684 585ZM710 572L723 572L723 585ZM489 585L502 585L489 598ZM541 585L541 598L528 598ZM554 585L567 585L554 598ZM567 585L567 598L554 598ZM580 585L593 585L580 598ZM645 585L658 585L658 598ZM645 598L658 611L645 611ZM671 598L684 611L671 611ZM684 598L697 598L697 611ZM710 598L723 598L723 611ZM723 598L736 598L736 611ZM500 611L508 611L500 619ZM516 611L524 611L516 619ZM668 611L676 611L676 619ZM708 611L716 611L716 619ZM540 619L548 619L540 627ZM556 619L564 619L556 627ZM668 619L676 627L668 627ZM692 619L700 619L700 627ZM708 619L716 619L716 627ZM524 627L532 627L524 635ZM548 627L556 627L548 635ZM700 627L708 635L700 635ZM708 627L716 627L716 635ZM708 627L716 635L708 635ZM724 627L732 627L732 635ZM532 635L532 643L524 643ZM572 635L572 643L564 643ZM668 635L676 635L676 643ZM684 635L692 635L692 643ZM708 635L716 635L716 643ZM540 643L548 643L540 651ZM652 643L660 643L660 651ZM692 643L700 643L700 651ZM716 643L724 651L716 651ZM724 643L732 651L724 651ZM500 651L508 651L500 659ZM548 651L548 659L540 659ZM668 651L676 659L668 659ZM676 651L684 659L676 659ZM548 659L548 667L540 667ZM580 659L580 667L572 667ZM660 659L668 659L668 667ZM676 659L684 659L684 667ZM700 659L708 667L700 667ZM548 667L548 675L540 675ZM564 667L564 675L556 675ZM668 667L676 675L668 675ZM676 667L684 667L684 675ZM540 675L548 675L540 683ZM668 675L676 683L668 683ZM692 675L700 675L700 683ZM548 683L548 691L540 691ZM676 683L684 683L684 691ZM684 683L692 691L684 691ZM708 683L716 691L708 691ZM676 691L684 699L676 699ZM700 691L708 691L708 699ZM700 691L708 699L700 699ZM708 691L716 691L716 699ZM508 699L516 699L508 707ZM540 699L548 699L540 707ZM660 699L668 699L668 707ZM668 699L676 699L676 707ZM676 699L684 699L684 707ZM692 699L700 699L700 707ZM708 699L716 707L708 707ZM508 707L516 707L508 715ZM540 707L540 715L532 715ZM540 707L548 707L540 715ZM692 707L700 707L700 715ZM700 707L708 715L700 715ZM668 715L676 723L668 723ZM684 715L692 723L684 723ZM692 715L700 715L700 723ZM716 715L724 723L716 723ZM516 723L516 731L508 731ZM524 723L532 723L524 731ZM548 723L548 731L540 731ZM660 723L668 723L668 731ZM660 723L668 731L660 731ZM668 723L676 731L668 731ZM684 723L692 731L684 731ZM708 723L716 723L716 731ZM524 731L524 739L516 739ZM524 731L532 731L524 739ZM676 731L684 739L676 739ZM692 731L700 731L700 739ZM708 731L716 739L708 739ZM532 739L532 747L524 747ZM540 739L548 739L540 747ZM548 739L556 739L548 747ZM668 739L676 739L676 747ZM692 739L700 739L700 747ZM524 747L524 755L516 755ZM660 747L668 747L668 755ZM652 755L660 763L652 763ZM660 755L668 755L668 763ZM660 755L668 763L660 763ZM668 755L676 755L676 763ZM676 755L684 755L684 763ZM692 755L700 755L700 763ZM700 755L708 763L700 763ZM668 763L676 763L676 771ZM668 763L676 771L668 771ZM684 763L692 771L684 771ZM716 763L724 763L724 771ZM484 771L484 779L476 779ZM508 771L508 779L500 779ZM676 771L684 779L676 779ZM684 771L692 771L692 779ZM684 771L692 779L684 779ZM700 771L708 779L700 779ZM708 771L716 779L708 779ZM716 771L724 779L716 779ZM500 779L508 779L500 787ZM508 779L508 787L500 787ZM516 779L524 779L516 787ZM668 779L676 779L676 787ZM708 779L716 787L708 787ZM716 779L724 779L724 787ZM716 779L724 787L716 787ZM484 787L484 795L476 795ZM500 787L508 787L500 795ZM516 787L516 795L508 795ZM660 787L668 795L660 795ZM684 787L692 795L684 795ZM540 795L548 795L540 803ZM692 795L700 795L700 803ZM716 795L724 803L716 803ZM660 803L668 803L668 811ZM700 803L708 811L700 811ZM684 811L692 819L684 819ZM484 819L492 819L484 827ZM668 819L676 819L676 827ZM684 819L692 819L692 827ZM684 819L692 827L684 827ZM708 819L716 819L716 827ZM500 827L500 835L492 835ZM668 827L676 827L676 835ZM668 827L676 835L668 835ZM716 827L724 827L724 835ZM684 835L692 843L684 843ZM684 843L692 843L692 851ZM508 851L516 851L508 859ZM676 851L684 851L684 859ZM684 851L692 859L684 859ZM692 851L700 851L700 859ZM492 859L500 859L492 867ZM508 859L516 859L508 867ZM676 859L684 859L684 867ZM684 859L692 859L692 867ZM684 859L692 867L684 867ZM708 859L716 867L708 867ZM676 867L684 875L676 875ZM684 867L692 867L692 875ZM700 867L708 867L708 875ZM708 867L716 867L716 875ZM708 867L716 875L708 875ZM492 875L500 875L492 883ZM500 875L508 875L500 883ZM476 891L484 891L476 899ZM484 891L492 891L484 899ZM484 899L492 899L484 907ZM500 899L500 907L492 907ZM500 907L508 907L500 915ZM484 923L492 923L484 931ZM492 923L500 923L492 931ZM516 923L516 931L508 931ZM500 931L500 939L492 939Z" fill="#0a0604" opacity="0.55"/>
<path d="M541 325L554 325L541 338ZM528 338L541 338L528 351ZM554 338L567 338L554 351ZM567 338L567 351L554 351ZM632 338L632 351L619 351ZM658 338L671 338L671 351ZM658 338L671 351L658 351ZM671 338L684 338L684 351ZM684 338L697 351L684 351ZM697 338L710 351L697 351ZM515 351L515 364L502 364ZM567 351L567 364L554 364ZM593 351L606 351L593 364ZM606 351L606 364L593 364ZM606 351L619 351L606 364ZM632 351L632 364L619 364ZM632 351L645 364L632 364ZM671 351L684 364L671 364ZM684 351L697 364L684 364ZM710 351L723 351L723 364ZM502 364L515 364L502 377ZM528 364L541 364L528 377ZM541 364L554 364L541 377ZM554 364L554 377L541 377ZM567 364L580 364L567 377ZM593 364L606 364L593 377ZM671 364L684 364L684 377ZM502 377L502 390L489 390ZM515 377L528 377L515 390ZM528 377L541 377L528 390ZM554 377L554 390L541 390ZM554 377L567 377L554 390ZM580 377L580 390L567 390ZM606 377L606 390L593 390ZM619 377L619 390L606 390ZM632 377L632 390L619 390ZM632 377L645 377L645 390ZM645 377L658 390L645 390ZM671 377L684 377L684 390ZM554 390L554 403L541 403ZM619 390L632 390L632 403ZM645 390L658 403L645 403ZM697 390L710 403L697 403ZM723 390L736 390L736 403ZM528 403L528 416L515 416ZM541 403L541 416L528 416ZM606 403L619 403L606 416ZM619 403L632 403L632 416ZM632 403L645 416L632 416ZM658 403L671 416L658 416ZM671 403L684 416L671 416ZM723 403L736 403L736 416ZM502 416L502 429L489 429ZM502 416L515 416L502 429ZM554 416L554 429L541 429ZM593 416L593 429L580 429ZM632 416L645 429L632 429ZM658 416L671 429L658 429ZM502 429L502 442L489 442ZM502 429L515 429L502 442ZM593 429L593 442L580 442ZM619 429L619 442L606 442ZM723 429L736 429L736 442ZM528 442L541 442L528 455ZM593 442L606 442L593 455ZM645 442L658 442L658 455ZM658 442L671 442L671 455ZM697 442L710 442L710 455ZM697 442L710 455L697 455ZM515 455L515 468L502 468ZM554 455L554 468L541 468ZM567 455L580 455L567 468ZM580 455L580 468L567 468ZM593 455L606 455L593 468ZM619 455L632 455L632 468ZM632 455L645 468L632 468ZM658 455L671 468L658 468ZM710 455L723 468L710 468ZM723 455L736 468L723 468ZM502 468L515 468L502 481ZM515 468L528 468L515 481ZM541 468L554 468L541 481ZM554 468L554 481L541 481ZM567 468L580 468L567 481ZM606 468L606 481L593 481ZM632 468L645 481L632 481ZM658 468L671 481L658 481ZM671 468L684 468L684 481ZM710 468L723 468L723 481ZM723 468L736 468L736 481ZM515 481L515 494L502 494ZM567 481L580 481L567 494ZM580 481L593 481L580 494ZM723 481L736 481L736 494ZM736 481L749 494L736 494ZM515 494L528 494L515 507ZM554 494L567 494L554 507ZM645 494L658 494L658 507ZM671 494L684 507L671 507ZM710 494L723 507L710 507ZM736 494L749 494L749 507ZM515 507L528 507L515 520ZM554 507L554 520L541 520ZM554 507L567 507L554 520ZM632 507L645 507L645 520ZM632 507L645 520L632 520ZM658 507L671 507L671 520ZM671 507L684 507L684 520ZM515 520L515 533L502 533ZM528 520L528 533L515 533ZM528 520L541 520L528 533ZM554 520L567 520L554 533ZM567 520L567 533L554 533ZM593 520L593 533L580 533ZM632 520L645 520L645 533ZM645 520L658 520L658 533ZM671 520L684 520L684 533ZM723 520L736 520L736 533ZM502 533L515 533L502 546ZM528 533L528 546L515 546ZM541 533L554 533L541 546ZM554 533L567 533L554 546ZM567 533L567 546L554 546ZM580 533L593 533L580 546ZM632 533L645 546L632 546ZM645 533L658 546L645 546ZM684 533L697 546L684 546ZM723 533L736 533L736 546ZM723 533L736 546L723 546ZM502 546L502 559L489 559ZM502 546L515 546L502 559ZM515 546L515 559L502 559ZM580 546L593 546L580 559ZM671 546L684 546L684 559ZM684 546L697 559L684 559ZM554 559L554 572L541 572ZM658 559L671 572L658 572ZM697 559L710 572L697 572ZM723 559L736 559L736 572ZM515 572L515 585L502 585ZM632 572L645 572L645 585ZM632 572L645 585L632 585ZM645 572L658 572L658 585ZM645 572L658 585L645 585ZM658 572L671 572L671 585ZM658 572L671 585L658 585ZM723 572L736 585L723 585ZM658 585L671 598L658 598ZM671 585L684 585L684 598ZM697 585L710 585L710 598ZM697 585L710 598L697 598ZM645 598L658 598L658 611ZM671 598L684 598L684 611ZM684 598L697 611L684 611ZM697 598L710 598L710 611ZM710 598L723 611L710 611ZM500 611L500 619L492 619ZM524 611L524 619L516 619ZM524 611L532 611L524 619ZM532 611L532 619L524 619ZM532 611L540 611L532 619ZM548 611L548 619L540 619ZM548 611L556 611L548 619ZM556 611L564 611L556 619ZM644 611L652 619L644 619ZM660 611L668 619L660 619ZM692 611L700 611L700 619ZM700 611L708 619L700 619ZM716 611L724 611L724 619ZM492 619L500 619L492 627ZM500 619L500 627L492 627ZM532 619L540 619L532 627ZM572 619L572 627L564 627ZM652 619L660 627L652 627ZM676 619L684 627L676 627ZM700 619L708 619L708 627ZM700 619L708 627L700 627ZM708 619L716 627L708 627ZM724 619L732 619L732 627ZM500 627L508 627L500 635ZM540 627L540 635L532 635ZM564 627L564 635L556 635ZM652 627L660 627L660 635ZM652 627L660 635L652 635ZM668 627L676 627L676 635ZM668 627L676 635L668 635ZM676 627L684 635L676 635ZM692 627L700 635L692 635ZM508 635L516 635L508 643ZM516 635L516 643L508 643ZM516 635L524 635L516 643ZM524 635L524 643L516 643ZM668 635L676 643L668 643ZM676 635L684 635L684 643ZM684 635L692 643L684 643ZM724 635L732 635L732 643ZM500 643L508 643L500 651ZM524 643L532 643L524 651ZM540 643L540 651L532 651ZM548 643L548 651L540 651ZM572 643L580 643L572 651ZM668 643L676 651L668 651ZM700 643L708 643L708 651ZM708 643L716 643L716 651ZM508 651L508 659L500 659ZM548 651L556 651L548 659ZM556 651L564 651L556 659ZM572 651L572 659L564 659ZM660 651L668 659L660 659ZM684 659L692 667L684 667ZM692 659L700 659L700 667ZM700 659L708 659L708 667ZM508 667L516 667L508 675ZM524 667L532 667L524 675ZM532 667L540 667L532 675ZM548 667L556 667L548 675ZM660 667L668 675L660 675ZM684 667L692 667L692 675ZM700 667L708 675L700 675ZM708 667L716 667L716 675ZM716 667L724 675L716 675ZM516 675L516 683L508 683ZM524 675L532 675L524 683ZM532 675L540 675L532 683ZM548 675L548 683L540 683ZM572 675L572 683L564 683ZM676 675L684 675L684 683ZM676 675L684 683L676 683ZM684 675L692 683L684 683ZM692 675L700 683L692 683ZM708 675L716 675L716 683ZM500 683L508 683L500 691ZM524 683L532 683L524 691ZM556 683L564 683L556 691ZM564 683L572 683L564 691ZM660 683L668 691L660 691ZM668 683L676 683L676 691ZM540 691L540 699L532 699ZM548 691L548 699L540 699ZM556 691L556 699L548 699ZM660 691L668 691L668 699ZM668 691L676 691L676 699ZM532 699L532 707L524 707ZM532 699L540 699L532 707ZM668 699L676 707L668 707ZM700 699L708 699L708 707ZM700 699L708 707L700 707ZM500 707L500 715L492 715ZM516 707L516 715L508 715ZM524 707L524 715L516 715ZM556 707L564 707L556 715ZM564 707L564 715L556 715ZM660 707L668 715L660 715ZM676 707L684 707L684 715ZM676 707L684 715L676 715ZM708 707L716 707L716 715ZM516 715L524 715L516 723ZM524 715L532 715L524 723ZM532 715L540 715L532 723ZM540 715L540 723L532 723ZM540 715L548 715L540 723ZM660 715L668 723L660 723ZM676 715L684 723L676 723ZM684 715L692 715L692 723ZM692 715L700 723L692 723ZM708 715L716 723L708 723ZM716 715L724 715L724 723ZM556 723L556 731L548 731ZM676 723L684 723L684 731ZM692 723L700 731L692 731ZM708 723L716 731L708 731ZM716 723L724 723L724 731ZM508 731L508 739L500 739ZM516 731L524 731L516 739ZM652 731L660 731L660 739ZM668 731L676 739L668 739ZM700 731L708 731L708 739ZM708 731L716 731L716 739ZM484 739L492 739L484 747ZM492 739L500 739L492 747ZM500 739L500 747L492 747ZM508 739L516 739L508 747ZM660 739L668 739L668 747ZM660 739L668 747L660 747ZM668 739L676 747L668 747ZM684 739L692 739L692 747ZM708 739L716 739L716 747ZM524 747L532 747L524 755ZM548 747L548 755L540 755ZM548 747L556 747L548 755ZM556 747L556 755L548 755ZM652 747L660 755L652 755ZM668 747L676 755L668 755ZM700 747L708 755L700 755ZM708 747L716 747L716 755ZM716 747L724 747L724 755ZM500 755L508 755L500 763ZM532 755L540 755L532 763ZM540 755L540 763L532 763ZM548 755L548 763L540 763ZM708 755L716 755L716 763ZM492 763L492 771L484 771ZM540 763L548 763L540 771ZM660 763L668 771L660 771ZM476 771L484 771L476 779ZM500 771L500 779L492 779ZM692 771L700 779L692 779ZM708 771L716 771L716 779ZM484 779L492 779L484 787ZM524 779L524 787L516 787ZM532 779L540 779L532 787ZM684 779L692 779L692 787ZM476 787L484 787L476 795ZM508 787L508 795L500 795ZM676 787L684 795L676 795ZM692 787L700 795L692 795ZM700 787L708 795L700 795ZM716 787L724 787L724 795ZM492 795L500 795L492 803ZM508 795L508 803L500 803ZM524 795L524 803L516 803ZM524 795L532 795L524 803ZM532 795L532 803L524 803ZM660 795L668 803L660 803ZM676 795L684 795L684 803ZM684 795L692 795L692 803ZM708 795L716 795L716 803ZM492 803L500 803L492 811ZM508 803L508 811L500 811ZM524 803L524 811L516 811ZM684 803L692 811L684 811ZM484 811L484 819L476 819ZM516 811L524 811L516 819ZM532 811L532 819L524 819ZM700 811L708 811L708 819ZM716 811L724 819L716 819ZM500 819L508 819L500 827ZM532 819L532 827L524 827ZM540 819L540 827L532 827ZM668 819L676 827L668 827ZM716 819L724 819L724 827ZM484 827L492 827L484 835ZM524 827L532 827L524 835ZM532 827L532 835L524 835ZM684 827L692 827L692 835ZM684 827L692 835L684 835ZM700 827L708 835L700 835ZM708 827L716 827L716 835ZM508 835L516 835L508 843ZM692 835L700 843L692 843ZM708 835L716 835L716 843ZM716 835L724 843L716 843ZM484 843L484 851L476 851ZM492 843L492 851L484 851ZM516 843L524 843L516 851ZM524 843L532 843L524 851ZM668 843L676 851L668 851ZM692 843L700 851L692 851ZM700 843L708 851L700 851ZM524 851L532 851L524 859ZM668 851L676 851L676 859ZM668 851L676 859L668 859ZM708 851L716 851L716 859ZM484 859L492 859L484 867ZM524 859L532 859L524 867ZM668 859L676 859L676 867ZM692 859L700 867L692 867ZM700 859L708 867L700 867ZM476 867L484 867L476 875ZM500 867L500 875L492 875ZM508 867L508 875L500 875ZM508 875L516 875L508 883ZM500 891L508 891L500 899ZM508 891L508 899L500 899ZM524 891L524 899L516 899ZM508 907L508 915L500 915ZM508 907L516 907L508 915ZM492 915L500 915L492 923Z" fill="#170e09" opacity="0.42"/>
<path d="M502 325L515 325L502 338ZM528 325L528 338L515 338ZM580 325L580 338L567 338ZM580 338L580 351L567 351ZM580 338L593 338L580 351ZM619 338L632 338L619 351ZM528 351L528 364L515 364ZM541 351L541 364L528 364ZM580 351L580 364L567 364ZM632 351L645 351L645 364ZM515 364L515 377L502 377ZM567 364L567 377L554 377ZM606 364L619 364L606 377ZM619 364L619 377L606 377ZM632 364L645 364L645 377ZM489 377L502 377L489 390ZM658 377L671 377L671 390ZM580 390L580 403L567 403ZM606 390L606 403L593 403ZM632 390L645 403L632 403ZM528 403L541 403L528 416ZM541 403L554 403L541 416ZM580 403L580 416L567 416ZM606 403L606 416L593 416ZM684 403L697 416L684 416ZM489 416L502 416L489 429ZM515 416L515 429L502 429ZM580 416L593 416L580 429ZM619 416L632 416L632 429ZM710 416L723 416L723 429ZM723 416L736 429L723 429ZM515 429L515 442L502 442ZM528 429L541 429L528 442ZM593 429L606 429L593 442ZM632 429L645 442L632 442ZM710 429L723 429L723 442ZM502 442L502 455L489 455ZM515 442L515 455L502 455ZM619 442L619 455L606 455ZM619 442L632 455L619 455ZM645 442L658 455L645 455ZM671 442L684 455L671 455ZM684 442L697 455L684 455ZM528 455L541 455L528 468ZM580 455L593 455L580 468ZM619 455L632 468L619 468ZM658 455L671 455L671 468ZM489 468L502 468L489 481ZM593 468L593 481L580 481ZM593 468L606 468L593 481ZM502 481L502 494L489 494ZM515 481L528 481L515 494ZM541 481L554 481L541 494ZM593 481L593 494L580 494ZM632 481L645 481L645 494ZM632 481L645 494L632 494ZM645 481L658 481L658 494ZM710 481L723 481L723 494ZM723 481L736 494L723 494ZM736 481L749 481L749 494ZM528 494L528 507L515 507ZM580 494L593 494L580 507ZM593 494L606 494L593 507ZM619 494L632 507L619 507ZM736 494L749 507L736 507ZM502 507L502 520L489 520ZM528 507L541 507L528 520ZM541 507L554 507L541 520ZM580 507L580 520L567 520ZM580 507L593 507L580 520ZM684 507L697 507L697 520ZM684 507L697 520L684 520ZM697 507L710 520L697 520ZM723 520L736 533L723 533ZM632 533L645 533L645 546ZM658 533L671 546L658 546ZM632 546L645 546L645 559ZM658 546L671 546L671 559ZM671 546L684 559L671 559ZM645 559L658 559L658 572ZM645 559L658 572L645 572ZM489 572L502 572L489 585ZM502 572L515 572L502 585ZM554 572L554 585L541 585ZM567 572L567 585L554 585ZM567 572L580 572L567 585ZM580 572L580 585L567 585ZM671 572L684 585L671 585ZM684 572L697 585L684 585ZM697 572L710 585L697 585ZM684 585L697 585L697 598ZM723 585L736 585L736 598ZM723 585L736 598L723 598ZM515 598L515 611L502 611ZM593 598L593 611L580 611ZM556 611L556 619L548 619ZM564 611L572 611L564 619ZM580 611L588 611L580 619ZM660 611L668 611L668 619ZM676 611L684 619L676 619ZM708 611L716 619L708 619ZM500 619L508 619L500 627ZM508 619L508 627L500 627ZM524 619L532 619L524 627ZM564 619L564 627L556 627ZM660 619L668 627L660 627ZM716 619L724 619L724 627ZM508 627L508 635L500 635ZM532 627L532 635L524 635ZM572 627L572 635L564 635ZM572 627L580 627L572 635ZM660 627L668 627L668 635ZM724 627L732 635L724 635ZM524 635L532 635L524 643ZM556 635L564 635L556 643ZM564 635L564 643L556 643ZM572 635L580 635L572 643ZM556 643L564 643L556 651ZM564 643L572 643L564 651ZM524 651L524 659L516 659ZM532 651L540 651L532 659ZM564 651L564 659L556 659ZM580 651L580 659L572 659ZM692 651L700 651L700 659ZM692 651L700 659L692 659ZM716 651L724 651L724 659ZM540 659L548 659L540 667ZM572 659L572 667L564 667ZM660 659L668 667L660 667ZM668 659L676 667L668 667ZM692 659L700 667L692 667ZM556 667L556 675L548 675ZM556 667L564 667L556 675ZM660 667L668 667L668 675ZM700 667L708 667L708 675ZM508 675L508 683L500 683ZM556 675L556 683L548 683ZM668 675L676 675L676 683ZM508 683L508 691L500 691ZM516 683L524 683L516 691ZM556 683L556 691L548 691ZM572 683L572 691L564 691ZM692 683L700 683L700 691ZM700 683L708 683L708 691ZM500 691L508 691L500 699ZM660 691L668 699L660 699ZM716 691L724 691L724 699ZM716 691L724 699L716 699ZM500 699L508 699L500 707ZM540 699L540 707L532 707ZM548 699L548 707L540 707ZM556 699L564 699L556 707ZM692 699L700 707L692 707ZM716 699L724 699L724 707ZM524 707L532 707L524 715ZM532 707L532 715L524 715ZM668 707L676 707L676 715ZM692 707L700 715L692 715ZM500 715L508 715L500 723ZM508 715L516 715L508 723ZM524 715L524 723L516 723ZM548 715L556 715L548 723ZM668 715L676 715L676 723ZM700 715L708 715L708 723ZM500 723L500 731L492 731ZM516 723L524 723L516 731ZM524 723L524 731L516 731ZM532 723L540 723L532 731ZM548 723L556 723L548 731ZM676 723L684 731L676 731ZM492 731L500 731L492 739ZM500 731L500 739L492 739ZM508 731L516 731L508 739ZM516 731L516 739L508 739ZM548 731L548 739L540 739ZM684 731L692 731L692 739ZM684 731L692 739L684 739ZM692 731L700 739L692 739ZM716 731L724 731L724 739ZM716 731L724 739L716 739ZM500 739L508 739L500 747ZM532 739L540 739L532 747ZM540 739L540 747L532 747ZM548 739L548 747L540 747ZM652 739L660 747L652 747ZM692 739L700 747L692 747ZM500 747L508 747L500 755ZM516 747L516 755L508 755ZM532 747L540 747L532 755ZM540 747L540 755L532 755ZM668 747L676 747L676 755ZM516 755L524 755L516 763ZM524 755L524 763L516 763ZM540 755L548 755L540 763ZM676 755L684 763L676 763ZM684 755L692 763L684 763ZM716 755L724 763L716 763ZM500 763L500 771L492 771ZM500 763L508 763L500 771ZM548 763L548 771L540 771ZM692 763L700 771L692 771ZM700 763L708 771L700 771ZM484 771L492 771L484 779ZM500 771L508 771L500 779ZM516 771L524 771L516 779ZM524 771L524 779L516 779ZM532 771L540 771L532 779ZM540 771L540 779L532 779ZM660 771L668 779L660 779ZM700 771L708 771L708 779ZM484 779L484 787L476 787ZM492 779L500 779L492 787ZM500 779L500 787L492 787ZM516 779L516 787L508 787ZM660 779L668 787L660 787ZM700 779L708 779L708 787ZM484 787L492 787L484 795ZM492 787L500 787L492 795ZM532 787L540 787L532 795ZM668 787L676 795L668 795ZM700 787L708 787L708 795ZM476 795L484 795L476 803ZM484 795L484 803L476 803ZM492 795L492 803L484 803ZM500 795L500 803L492 803ZM532 795L540 795L532 803ZM660 795L668 795L668 803ZM700 795L708 795L708 803ZM708 795L716 803L708 803ZM476 803L484 803L476 811ZM492 803L492 811L484 811ZM500 803L500 811L492 811ZM516 803L516 811L508 811ZM668 803L676 811L668 811ZM676 803L684 811L676 811ZM684 803L692 803L692 811ZM708 803L716 811L708 811ZM500 811L500 819L492 819ZM508 811L516 811L508 819ZM708 811L716 811L716 819ZM476 819L484 819L476 827ZM532 819L540 819L532 827ZM692 819L700 819L700 827ZM500 827L508 827L500 835ZM508 827L508 835L500 835ZM516 827L516 835L508 835ZM708 827L716 835L708 835ZM500 835L508 835L500 843ZM516 835L524 835L516 843ZM524 835L532 835L524 843ZM668 835L676 843L668 843ZM684 835L692 835L692 843ZM692 835L700 835L700 843ZM700 835L708 835L708 843ZM500 843L500 851L492 851ZM532 843L532 851L524 851ZM532 843L540 843L532 851ZM692 843L700 843L700 851ZM700 843L708 843L708 851ZM492 851L492 859L484 859ZM516 851L524 851L516 859ZM676 851L684 859L676 859ZM516 859L516 867L508 867ZM708 859L716 859L716 867ZM516 867L524 867L516 875ZM676 867L684 867L684 875ZM476 875L484 875L476 883ZM508 875L508 883L500 883ZM516 875L524 875L516 883ZM484 883L492 883L484 891ZM492 883L492 891L484 891ZM500 883L500 891L492 891ZM500 883L508 883L500 891ZM516 883L516 891L508 891ZM500 891L500 899L492 899ZM508 891L516 891L508 899ZM516 891L516 899L508 899ZM492 899L492 907L484 907ZM508 899L516 899L508 907ZM516 899L524 899L516 907ZM524 899L524 907L516 907ZM484 907L492 907L484 915ZM516 907L516 915L508 915ZM484 915L484 923L476 923ZM484 915L492 915L484 923ZM508 915L508 923L500 923ZM508 915L516 915L508 923Z" fill="#543620" opacity="0.36"/>
<path d="M515 325L515 338L502 338ZM528 325L541 325L528 338ZM554 325L554 338L541 338ZM541 338L554 338L541 351ZM593 338L606 338L593 351ZM606 338L619 338L606 351ZM632 364L632 377L619 377ZM580 377L593 377L580 390ZM515 390L528 390L515 403ZM541 390L554 390L541 403ZM515 403L528 403L515 416ZM554 403L567 403L554 416ZM567 403L567 416L554 416ZM580 403L593 403L580 416ZM593 403L593 416L580 416ZM528 416L528 429L515 429ZM554 416L567 416L554 429ZM567 416L567 429L554 429ZM580 416L580 429L567 429ZM606 416L619 416L606 429ZM619 416L619 429L606 429ZM528 429L528 442L515 442ZM567 429L567 442L554 442ZM580 429L593 429L580 442ZM515 442L528 442L515 455ZM541 442L541 455L528 455ZM554 442L554 455L541 455ZM567 442L567 455L554 455ZM580 442L593 442L580 455ZM593 442L593 455L580 455ZM502 455L502 468L489 468ZM515 455L528 455L515 468ZM528 455L528 468L515 468ZM541 455L541 468L528 468ZM593 455L593 468L580 468ZM528 468L528 481L515 481ZM528 468L541 468L528 481ZM541 468L541 481L528 481ZM580 468L580 481L567 481ZM580 468L593 468L580 481ZM528 481L541 481L528 494ZM541 481L541 494L528 494ZM567 481L567 494L554 494ZM593 481L606 481L593 494ZM606 481L606 494L593 494ZM541 494L554 494L541 507ZM554 494L554 507L541 507ZM567 494L567 507L554 507ZM606 507L606 520L593 520ZM580 520L593 520L580 533ZM606 520L606 533L593 533ZM606 533L606 546L593 546ZM489 546L502 546L489 559ZM528 559L541 559L528 572ZM502 585L502 598L489 598ZM502 585L515 585L502 598ZM541 585L554 585L541 598ZM567 598L580 598L567 611ZM508 611L508 619L500 619ZM580 619L580 627L572 627ZM508 627L516 627L508 635ZM548 627L548 635L540 635ZM540 635L540 643L532 643ZM564 635L572 635L564 643ZM572 643L572 651L564 651ZM556 651L556 659L548 659ZM508 659L516 659L508 667ZM516 659L516 667L508 667ZM532 659L540 659L532 667ZM500 667L508 667L500 675ZM508 675L516 675L508 683ZM532 683L540 683L532 691ZM556 691L564 691L556 699ZM500 707L508 707L500 715ZM532 707L540 707L532 715ZM500 715L500 723L492 723ZM548 715L548 723L540 723ZM556 715L556 723L548 723ZM508 739L508 747L500 747ZM492 747L500 747L492 755ZM500 747L500 755L492 755ZM524 763L524 771L516 771ZM548 779L548 787L540 787ZM540 795L540 803L532 803ZM484 811L492 811L484 819ZM492 827L500 827L492 835ZM540 827L540 835L532 835ZM476 835L484 835L476 843ZM484 835L492 835L484 843ZM492 835L492 843L484 843ZM540 835L540 843L532 843ZM476 843L484 843L476 851ZM492 843L500 843L492 851ZM516 851L516 859L508 859ZM492 859L492 867L484 867ZM484 867L484 875L476 875ZM492 867L492 875L484 875ZM500 875L500 883L492 883ZM508 883L508 891L500 891ZM516 883L524 883L516 891ZM524 883L524 891L516 891ZM524 907L524 915L516 915ZM508 931L508 939L500 939Z" fill="#74655a" opacity="0.30"/>
<path d="M658 351L671 364L658 364ZM710 364L723 377L710 377ZM684 377L697 390L684 390ZM697 377L710 390L697 390ZM645 390L658 390L658 403ZM658 390L671 390L671 403ZM658 390L671 403L658 403ZM671 390L684 403L671 403ZM710 390L723 403L710 403ZM671 403L684 403L684 416ZM658 416L671 416L671 429ZM671 416L684 416L684 429ZM671 416L684 429L671 429ZM645 429L658 429L658 442ZM671 429L684 429L684 442ZM671 442L684 442L684 455ZM671 455L684 468L671 468ZM619 468L632 481L619 481ZM619 494L632 494L632 507ZM619 507L632 507L632 520ZM710 507L723 520L710 520ZM736 507L749 507L749 520ZM645 533L658 533L658 546ZM710 533L723 546L710 546ZM658 546L671 559L658 559ZM723 546L736 559L723 559ZM658 585L671 585L671 598ZM723 598L736 611L723 611ZM652 611L660 611L660 619ZM684 611L692 611L692 619ZM684 611L692 619L684 619ZM684 619L692 619L692 627ZM684 619L692 627L684 627ZM692 635L700 635L700 643ZM716 635L724 643L716 643ZM724 635L732 643L724 643ZM660 643L668 643L668 651ZM660 643L668 651L660 651ZM668 643L676 643L676 651ZM724 643L732 643L732 651ZM668 659L676 659L676 667ZM684 659L692 659L692 667ZM684 667L692 675L684 675ZM668 683L676 691L668 691ZM708 683L716 683L716 691ZM716 683L724 683L724 691ZM676 691L684 691L684 699ZM708 691L716 699L708 699ZM660 707L668 707L668 715ZM684 723L692 723L692 731ZM700 731L708 739L700 739ZM660 747L668 755L660 755ZM676 747L684 747L684 755ZM684 747L692 747L692 755ZM692 747L700 747L700 755ZM652 755L660 755L660 763ZM708 755L716 763L708 763ZM668 771L676 779L668 779ZM668 779L676 787L668 787ZM668 795L676 795L676 803ZM700 803L708 803L708 811ZM676 811L684 819L676 819ZM708 811L716 819L708 819ZM668 859L676 867L668 867ZM692 859L700 859L700 867ZM700 867L708 875L700 875Z" fill="#80501f" opacity="0.32"/>
<path d="M528 390L541 390L528 403ZM593 390L606 390L593 403ZM567 403L580 403L567 416ZM619 403L632 416L619 416ZM528 416L541 416L528 429ZM593 416L606 416L593 429ZM697 416L710 416L710 429ZM541 429L554 429L541 442ZM606 429L619 429L606 442ZM567 442L580 442L567 455ZM554 455L567 455L554 468ZM606 455L606 468L593 468ZM723 455L736 455L736 468ZM554 468L567 468L554 481ZM567 468L567 481L554 481ZM541 494L541 507L528 507ZM606 494L606 507L593 507ZM541 507L541 520L528 520ZM567 507L567 520L554 520ZM645 546L658 559L645 559ZM658 559L671 559L671 572ZM684 559L697 572L684 572ZM710 585L723 598L710 598ZM684 627L692 635L684 635ZM708 643L716 651L708 651ZM660 651L668 651L668 659ZM668 667L676 667L676 675ZM668 691L676 699L668 699ZM692 691L700 691L700 699ZM652 739L660 739L660 747ZM676 739L684 747L676 747ZM708 739L716 747L708 747ZM676 763L684 763L684 771ZM716 771L724 771L724 779ZM692 787L700 787L700 795ZM692 803L700 811L692 811ZM676 859L684 867L676 867ZM708 875L716 883L708 883Z" fill="#8c8a88" opacity="0.40"/>
</g><!--/FACETS-->
<path d="M603 339 L632 344.6 L633.4 362 L621 368 L606 358 L596 344 Z" fill="#8a6a5c" opacity="0.7"/>
<path d="M650 347.4 L684 346.6 L702 351 L692 372 L662 381 L648 368 Z" fill="#70503c" opacity="0.6"/>
<path d="M560 336 L596 340 L604 356 L580 352 Z" fill="#5a4034" opacity="0.5"/>
<g>
<path d="M552.2 394.4 L577.8 401.1 L548.9 427.8 Z" fill="#a09a94" opacity="0.75"/>
<path d="M567.8 404.4 L577.8 402.2 L575.6 416.7 Z" fill="#bcb4ac" opacity="0.8"/>
<path d="M561 436.7 L570 434.4 L548.9 472.2 L545.6 467.8 Z" fill="#8c8a88" opacity="0.6"/>
<path d="M584.4 443.3 L591 438.9 L586.7 450 Z" fill="#c0bcb8" opacity="0.8"/>
<path d="M573.3 474.4 L582.2 461 L583.3 476.7 Z" fill="#8a8480" opacity="0.6"/>
<path d="M582 393 L597.8 392 L596.7 406.7 Z" fill="#7a7470" opacity="0.6"/>
<path d="M536 545 L552 538 L548 560 L538 566 Z" fill="#6a6660" opacity="0.55"/>
<path d="M690 476 L712 470 L714 486 L694 490 Z" fill="#6a6258" opacity="0.5"/>
</g>
<rect x="460" y="280" width="300" height="670" fill="#000" filter="url(#fDark)"/>
<g clip-path="url(#cpLeft)"><rect x="460" y="280" width="300" height="670" fill="#000" filter="url(#fLight)" opacity="0.3"/></g>
<rect x="460" y="280" width="300" height="670" fill="#000" filter="url(#fLight2)" opacity="0.25"/>
</g>
<path d="M510.9 326.6 L520.6 328.2 L516.7 355.7 L513.2 381 L510 395 L506 427.4 L506 460 L506.6 492 L496 492 L496 460 L497 427.4 L501.2 395 L503.5 380 L507 353 Z" fill="#33241a" opacity="0.55"/>
<path d="M520.6 328.2 L529.2 329.7 L523.6 355.7 L517.5 381 L512.9 395 L509.3 427.4 L507.8 455 L506.9 482 L506.5 482 L506.4 455 L506.4 427.4 L510 395 L513.2 381 L516.7 355.7 Z" fill="#dddddd"/>
<!-- fly opening (background showing through) -->
<path d="M632.6 345 L644 346 C644.2 357 643.4 367 641.4 373 C640.6 375.6 639.4 377.4 638.6 377.4 C637.4 377 636.2 374.6 635.2 371.6 C633.4 365 632.6 356 632.6 345 Z" fill="#d1d1d1"/>
<path d="M644 346 L649.4 346.6 C648.6 358 646 371 641 381 L638.8 377.4 C639.6 377.2 640.6 375.6 641.4 373 C643.4 367 644.2 357 644 346 Z" fill="#2a1c14"/>
<!-- belt -->
<path id="beltp" d="M513.5 295.3 L520.8 293.1 L545.6 294.6 L582 300.4 L605.4 301.9 L663.7 309.9 L684.2 312.8 L716.3 318.6 C719.5 326 721 336 720.4 345 L719 345.8 L684.2 345.2 L625.8 341.4 L592.3 336.3 L509.2 327 C506.6 322 506 316 507.4 309 C508.6 303 510.6 298 513.5 295.3 Z" fill="url(#gBelt)"/>
<path d="M513.5 295.3 L520.8 293.1 L545.6 294.6 L582 300.4 L605.4 301.9 L663.7 309.9 L684.2 312.8 L716.3 318.6 C719.5 326 721 336 720.4 345 L719 345.8 L684.2 345.2 L625.8 341.4 L592.3 336.3 L509.2 327 C506.6 322 506 316 507.4 309 C508.6 303 510.6 298 513.5 295.3 Z" fill="#000" filter="url(#fBelt)"/>
<path d="M513.5 295.3 L520.8 293.1 L545.6 294.6 L582 300.4 L605.4 301.9 L663.7 309.9 L684.2 312.8 L716.3 318.6 C719.5 326 721 336 720.4 345 L719 345.8 L684.2 345.2 L625.8 341.4 L592.3 336.3 L509.2 327 C506.6 322 506 316 507.4 309 C508.6 303 510.6 298 513.5 295.3 Z" fill="#000" filter="url(#fBelt2)"/>
<path d="M509.2 325 L592.3 334.3 L625.8 339.4 L684.2 343.2 L719 343.8 L719 345.8 L684.2 345.2 L625.8 341.4 L592.3 336.3 L509.2 327 Z" fill="#4a2e1e" opacity="0.7"/>
<!-- belt loops -->
<path d="M592.4 302.6 L601.8 303.8 L601.6 340 L592.2 338.6 Z" fill="#3e2a22"/>
<path d="M683.4 310.4 L692 311.6 L691.8 348 L683.2 347 Z" fill="#3e2a22"/>
<!-- buckle -->
<path d="M625.4 305 L629.8 304.6 L634 307.6 L659 309 L663.4 310 L666.8 314.6 L666.6 326 L668.4 329.6 L667 333 L667 341 L663 346 L657.6 347 L646.6 346.6 L645.6 343.6 L644 346.4 L631 345.4 L626.6 343.6 L622.4 337 L620.9 312 Z M631 311.4 L657 313.4 C659.8 313.8 661.4 315.6 661.6 318.4 L662.2 336 C662.2 339 660.6 340.8 657.6 340.6 L632.6 339 C629.4 338.6 627.4 336.6 627.2 333.4 L626.6 316 C626.6 313 628 311.4 631 311.4 Z" fill="url(#gBuck)" fill-rule="evenodd"/>
<path d="M625.4 305 L629.8 304.6 L632 307 L627.2 312.6 L627.4 334 L631.4 340.4 L644 342 L644 346.4 L631 345.4 L626.6 343.6 L622.4 337 L620.9 312 Z" fill="#dfe6ea" opacity="0.5"/>
<path d="M634 307.6 L659 309 L663.4 310 L661 313.6 L657 312.4 L634.4 310.8 Z" fill="#3a3e42" opacity="0.8"/>
<path d="M656.6 327.6 H664 V331.6 H656.6 Z" fill="#3a322e"/>
<!-- fly lace -->
<path d="M628.8 352 L653.5 363 M629 362.4 L653.4 353.6" stroke="#c9b98a" stroke-width="1.1" fill="none"/>
<!-- side laces -->
<path d="M515.2 328 C513.6 334 513.8 340 513.2 346" stroke="#d8c68c" stroke-width="1.6" fill="none"/>
<path d="M507.3 366.3 L516.7 379.7 M517.3 369.9 L506.7 376.1 M497.3 439.3 L506.7 452.7 M507.3 442.9 L496.7 449.1 M495.9 509.5 L503.4 522.5 M504.9 513.6 L494.5 518.4 M495.9 568.9 L502.9 581.1 M504.2 572.8 L494.6 577.2 M499.6 629.4 L506.0 641.8 M507.7 633.6 L497.9 637.6 M500.7 677.9 L506.5 690.1 M508.4 682.2 L498.8 685.8 M495.7 722.0 L499.3 734.0 M502.1 727.0 L492.9 729.0 M486.6 765.7 L490.0 778.3 M493.2 771.1 L483.4 772.9 M480.2 811.7 L485.0 823.3 M487.1 816.0 L478.1 819.0 M480.3 854.6 L485.3 865.4 M487.1 858.4 L478.5 861.6" stroke="#cdbb82" stroke-width="1.4" fill="none" stroke-linecap="round"/>
<path d="M481.6 898 C480.8 910 479.8 922 480 933" stroke="#d9cc9a" stroke-width="1.3" fill="none"/>
<path d="M479 900 L485 904" stroke="#d9cc9a" stroke-width="1.2" fill="none"/>
</svg>
<!--PANTS-END-->

<!-- TASKBAR -->
<!--TASK-START-->
<div class="abs" style="left:197px;top:1041px;width:46px;height:38px;background:#333b48;border:1px solid #7a808a"></div>
<div class="abs" style="left:491px;top:1041px;width:46px;height:38px;background:#333b48;border:1px solid #7a808a"></div>
<div class="abs" style="left:540px;top:1041px;width:46px;height:38px;background:linear-gradient(135deg,#585e68,#6c727c);border:1px solid #dcdde0"></div>
<svg class="abs" style="left:0;top:1040px" width="1920" height="40" viewBox="0 1040 1920 40">
<defs>
<linearGradient id="utg" x1="0" y1="0" x2="0" y2="1"><stop offset="0" stop-color="#1cb040"/><stop offset="0.5" stop-color="#0a9a2c"/><stop offset="1" stop-color="#18b848"/></linearGradient>
<linearGradient id="npg" x1="0" y1="0" x2="0" y2="1"><stop offset="0" stop-color="#ffffff"/><stop offset="0.45" stop-color="#e4f2c8"/><stop offset="1" stop-color="#6cc020"/></linearGradient>
<linearGradient id="calcg" x1="0" y1="0" x2="0" y2="1"><stop offset="0" stop-color="#bfe0f8"/><stop offset="1" stop-color="#7ab8e8"/></linearGradient>
<linearGradient id="skyg" x1="0" y1="0" x2="1" y2="1"><stop offset="0" stop-color="#1840a0"/><stop offset="0.6" stop-color="#4a80d0"/><stop offset="1" stop-color="#b8d4f0"/></linearGradient>
<linearGradient id="kasg" x1="0" y1="0" x2="0" y2="1"><stop offset="0" stop-color="#f6a0a0"/><stop offset="0.45" stop-color="#ec3030"/><stop offset="0.5" stop-color="#e60000"/><stop offset="1" stop-color="#e00000"/></linearGradient>
<linearGradient id="kasd" x1="0" y1="0" x2="0" y2="1"><stop offset="0" stop-color="#b0b0b0"/><stop offset="0.6" stop-color="#303030"/><stop offset="1" stop-color="#000"/></linearGradient>
<linearGradient id="steamg2" x1="0.3" y1="0" x2="0.6" y2="1"><stop offset="0" stop-color="#141c4c"/><stop offset="0.5" stop-color="#16306e"/><stop offset="0.8" stop-color="#1a6cb0"/><stop offset="1" stop-color="#20a0e0"/></linearGradient>
<radialGradient id="steamg" cx="0.4" cy="0.3" r="0.8"><stop offset="0" stop-color="#1a3a6a"/><stop offset="0.6" stop-color="#12306a"/><stop offset="1" stop-color="#1a70b8"/></radialGradient>
</defs>
<!-- start -->
<path d="M14 1052.4 L22 1051.2 V1059.4 H14 Z M23.2 1051 L34.2 1049.6 V1059.4 H23.2 Z M14 1060.6 H22 V1068.8 L14 1067.6 Z M23.2 1060.6 H34.2 V1070.4 L23.2 1069 Z" fill="#fff"/>
<!-- search -->
<circle cx="74.6" cy="1057.6" r="5.2" fill="none" stroke="#fff" stroke-width="1.3"/>
<path d="M70.8 1061.4 L64.2 1068" stroke="#fff" stroke-width="1.5" fill="none"/>
<!-- task view -->
<rect x="114.5" y="1053.5" width="11" height="13" fill="none" stroke="#fff" stroke-width="1"/>
<path d="M112.6 1055.5 H110.5 V1064.5 H112.6 M127.4 1055.5 H129.5 V1064.5 H127.4" fill="none" stroke="#fff" stroke-width="1"/>
<!-- utorrent -->
<rect x="159.5" y="1048.5" width="22.6" height="22.6" rx="1.5" fill="url(#utg)" stroke="#c8ecd8" stroke-width="1.2"/>
<path d="M166.6 1053.6 H169.4 V1061.6 C169.4 1063 170.2 1063.6 171.4 1063.6 C172.8 1063.6 173.6 1062.8 173.6 1061.4 V1053.6 H176.4 V1062.6 C176.4 1063.4 176.8 1063.8 177.6 1063.6 V1065.6 C175.8 1066.2 174.6 1065.8 174 1064.6 C173 1065.8 171.6 1066.2 169.4 1065.6 V1067.8 H166.6 Z" fill="#fff"/>
<!-- explorer -->
<path d="M209 1052.4 H217.6 L218.8 1053.8 H230.4 V1068.4 H209 Z" fill="#f4cf6a"/>
<path d="M209 1054.6 H230.4 V1068.4 H209 Z" fill="#ffe592"/>
<path d="M210 1052.8 H214.6 V1053.6 H210 Z" fill="#fff3c8"/>
<path d="M213 1061.2 H226.6 V1068.8 H223 V1064.4 H216.6 V1068.8 H213 Z" fill="#2c9fea"/>
<!-- notepad-ish -->
<path d="M258 1048.4 H271.6 L276 1052.8 V1071 H258 Z" fill="url(#npg)" stroke="#c8c8c8" stroke-width="0.8"/>
<path d="M271.6 1048.4 V1052.8 H276 Z" fill="#d0d0d0"/>
<rect x="262.4" y="1054.6" width="1.4" height="7.4" fill="#222"/><rect x="264.6" y="1058" width="4" height="1" fill="#333"/>
<path d="M278.4 1049.6 L280.2 1050.8 L271.6 1065.4 L270 1066.2 L270 1064.4 Z" fill="#f0a818"/><path d="M278.4 1049.6 L280.2 1050.8 L279.4 1052 L277.8 1050.8 Z" fill="#d03030"/>
<!-- word -->
<path d="M306.4 1051.2 L319.6 1048.8 V1070.6 L306.4 1068.2 Z" fill="#2b579a"/>
<rect x="319.6" y="1051" width="9.8" height="17.2" fill="#fff" stroke="#2b579a" stroke-width="0.8"/>
<path d="M321 1054 H328 M321 1056.4 H328 M321 1058.8 H328 M321 1061.2 H328 M321 1063.6 H328 M321 1066 H328" stroke="#2b579a" stroke-width="1"/>
<path d="M308.6 1056 L310.2 1063.6 L311.8 1057.6 L313 1057.6 L314.6 1063.6 L316.2 1056" fill="none" stroke="#fff" stroke-width="1.3"/>
<!-- excel -->
<path d="M355.6 1051 L368.8 1048.6 V1070.6 L355.6 1068.2 Z" fill="#1e7145"/>
<rect x="368.8" y="1051" width="9" height="17.2" fill="#fff" stroke="#1e7145" stroke-width="0.8"/>
<path d="M370 1054 H377.4 M370 1056.8 H377.4 M370 1059.6 H377.4 M370 1062.4 H377.4 M370 1065.2 H377.4 M373.6 1051 V1068" stroke="#1e7145" stroke-width="1"/>
<path d="M359 1055.4 L364.6 1064 M364.6 1055.4 L359 1064" stroke="#fff" stroke-width="1.6"/>
<!-- calculator -->
<rect x="407.2" y="1049" width="16.8" height="21.8" rx="1" fill="url(#calcg)" stroke="#5a9ad4" stroke-width="0.8"/>
<rect x="408.8" y="1051" width="13.6" height="1.2" fill="#f0a030"/>
<rect x="409" y="1053" width="13.2" height="5.2" fill="#e4f0fc" stroke="#88b4dc" stroke-width="0.5"/>
<path d="M409.4 1061 H422 M409.4 1063.6 H422 M409.4 1066.2 H422 M409.4 1068.6 H422" stroke="#e8f2fc" stroke-width="1.3" stroke-dasharray="2.4 0.9"/>
<rect x="420" y="1064" width="2" height="5.4" fill="#f0a030"/>
<!-- paint-ish -->
<rect x="453.6" y="1048.6" width="18.4" height="22.4" fill="#f4f4f4" stroke="#d0d0d0" stroke-width="0.6"/>
<rect x="455" y="1050" width="15.6" height="16.4" fill="url(#skyg)"/>
<path d="M455 1061 C459 1059.6 465 1060.4 470.6 1059.6 V1062.6 H455 Z" fill="#f0f4fa"/>
<rect x="455" y="1062.6" width="15.6" height="3.8" fill="#1a2a5a"/>
<path d="M475.6 1054.4 L475 1056.4 L462 1067.4 L460.4 1065.8 Z" fill="#c4202c"/>
<path d="M461.4 1066.8 L458 1069 L459.4 1065.6 Z" fill="#d8d8e0"/>
<!-- chrome -->
<circle cx="514" cy="1059.9" r="11.1" fill="#db4437"/>
<path d="M514 1059.9 L504.4 1054.3 A11.1 11.1 0 0 0 519.55 1069.5 Z" fill="#0f9d58"/>
<path d="M514 1059.9 L519.55 1069.5 A11.1 11.1 0 0 0 523.6 1054.3 L514 1054.3 Z" fill="#ffcd40"/>
<path d="M514 1059.9 L504.4 1054.3 L506 1052 L514 1054.4 Z" fill="#db4437"/>
<circle cx="514" cy="1059.9" r="5.1" fill="#f1f1f1"/><circle cx="514" cy="1059.9" r="4.1" fill="#4285f4"/>
<!-- outfit studio -->
<path d="M555.4 1048.4 L565 1048.4 C566.6 1050.4 568.6 1052 569.6 1054 C570.6 1056.2 569.8 1058 568.4 1059.2 C567.4 1060.4 567.6 1062.4 567.6 1064.4 C567.6 1066.8 567 1069.4 566.4 1071.4 L553.4 1071.4 C556 1068.6 558 1065.6 558 1062 C558 1058 555.8 1053 555.4 1048.4 Z" fill="#3a3a3a"/>
<path d="M565.4 1048.6 C567 1050.6 569.2 1052 570.2 1054.2 C571.2 1056.4 570.4 1058.2 568.8 1059.4 C567.8 1060.6 568.2 1062.6 568.2 1064.4 C568.2 1065.4 568 1066.4 567.8 1067.2" fill="none" stroke="#f0b840" stroke-width="1.1"/>
<!-- tray -->
<path d="M1646.6 1062.4 L1650.4 1058 L1654.2 1062.4 Z" fill="#fff"/>
<path d="M1668 1053.2 L1673 1053.2 L1673.4 1056.4 L1677.2 1053.2 L1682.2 1053.2 L1682.2 1055.4 L1679 1059.4 L1682.4 1059.6 V1067 H1675 L1674 1064.6 L1670.6 1067 H1668 Z" fill="#fff"/>
<path d="M1668.8 1054 L1672.6 1054 L1673.3 1057.2 L1677.4 1054 L1681.4 1054 L1681.4 1055 L1669.6 1066.4 L1668.8 1066.4 Z" fill="url(#kasg)"/>
<path d="M1677.6 1060 L1681.6 1060.2 V1066.2 H1675.6 L1675.4 1063.8 Z" fill="url(#kasd)"/>
<circle cx="1698.8" cy="1060.1" r="7.8" fill="url(#steamg2)"/>
<circle cx="1701.6" cy="1057.6" r="2.7" fill="none" stroke="#f4f6f8" stroke-width="1.3"/><circle cx="1701.6" cy="1057.6" r="1.1" fill="#dfe6ee"/>
<path d="M1691.2 1060.6 L1695.4 1062.2 C1696 1061.2 1697.2 1060.8 1698.2 1061.2 L1699.8 1059.2 L1702.2 1060.8 L1699.8 1062.8 C1699.8 1064.6 1698.4 1065.6 1696.8 1065.4 C1695.6 1065.2 1694.8 1064.4 1694.6 1063.4 L1691.4 1062.2 Z" fill="#f4f6f8"/>
<circle cx="1697.2" cy="1063.2" r="1.2" fill="#2a4a8a"/>
<rect x="1719" y="1054.6" width="11.6" height="8.8" fill="none" stroke="#fff" stroke-width="1.1"/>
<path d="M1725 1063.4 V1066.4 M1721.4 1066.6 H1728.6" stroke="#fff" stroke-width="1.1"/>
<rect x="1715.4" y="1054.6" width="4.4" height="3.6" fill="#000b19" stroke="#fff" stroke-width="1"/>
<path d="M1717.4 1058.4 V1066.6 H1720" stroke="#fff" stroke-width="1" fill="none"/>
<path d="M1739.4 1057.6 H1742 L1745.4 1054.2 V1066 L1742 1062.6 H1739.4 Z" fill="none" stroke="#fff" stroke-width="1"/>
<path d="M1747.4 1057.8 C1748.6 1059.2 1748.6 1061 1747.4 1062.4" fill="none" stroke="#fff" stroke-width="1"/>
<path d="M1749.8 1055.8 C1751.8 1058.2 1751.8 1062 1749.8 1064.4" fill="none" stroke="#9aa0a8" stroke-width="1"/>
<path d="M1752.2 1053.8 C1755.2 1057.2 1755.2 1063 1752.2 1066.4" fill="none" stroke="#5a626c" stroke-width="1"/>
<path d="M1873.6 1052.8 H1888.6 V1064 H1883.4 L1881.2 1066.6 L1879 1064 H1873.6 Z" fill="none" stroke="#fff" stroke-width="1.1"/>
</svg>
<div class="t w" id="tx_rus" style="left:1765.4px;top:1053px;letter-spacing:-0.25px">РУС</div>
<div class="t w" id="tx_time" style="left:1817.0px;top:1044px;letter-spacing:-0.80px">0:11</div>
<div class="t w" id="tx_date" style="left:1800.5px;top:1062px;letter-spacing:-0.61px">30.10.2018</div>
<!--TASK-END-->

</body>
</html>
